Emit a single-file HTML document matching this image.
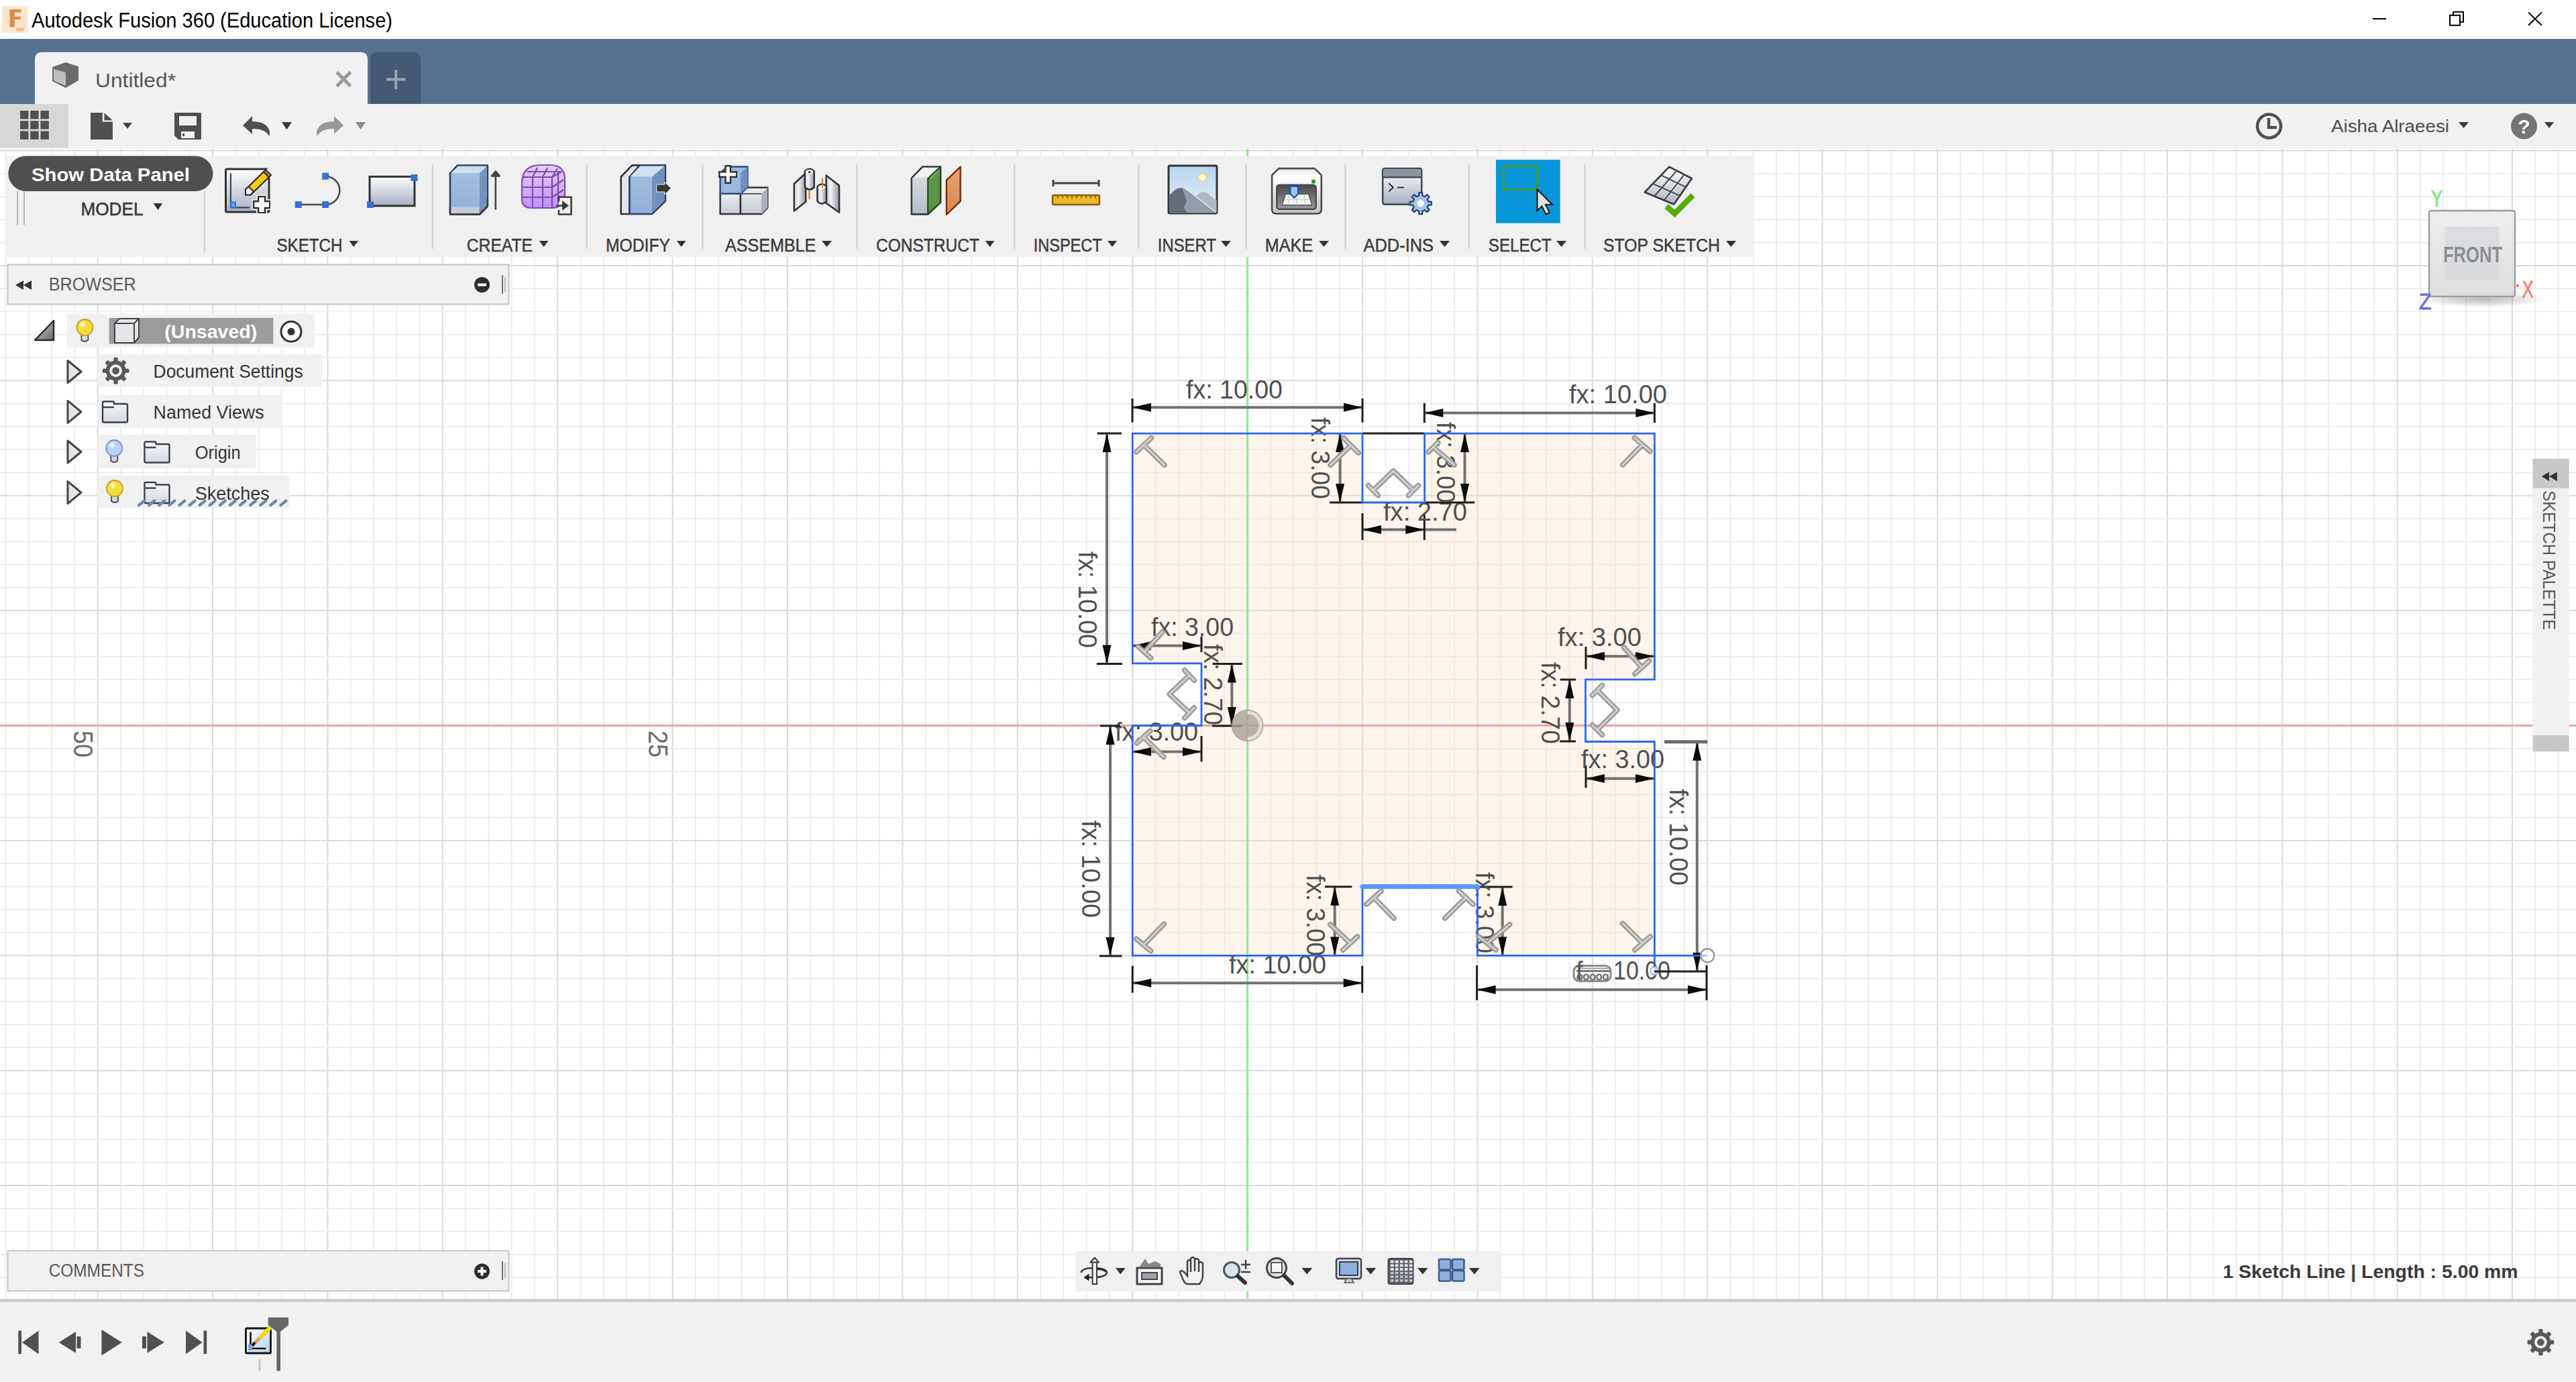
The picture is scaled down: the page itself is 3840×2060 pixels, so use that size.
<!DOCTYPE html>
<html><head><meta charset="utf-8"><title>Autodesk Fusion 360</title>
<style>html,body{margin:0;padding:0;width:3840px;height:2060px;overflow:hidden;background:#fff}
svg{display:block} text{font-family:"Liberation Sans", sans-serif;}</style></head>
<body><svg width="3840" height="2060" viewBox="0 0 3840 2060">
<rect x="0" y="0" width="3840" height="2060" fill="#ffffff"/>
<line x1="8.5" y1="222.0" x2="8.5" y2="1937.0" stroke="#ececec" stroke-width="1.7" />
<line x1="42.8" y1="222.0" x2="42.8" y2="1937.0" stroke="#ececec" stroke-width="1.7" />
<line x1="77.0" y1="222.0" x2="77.0" y2="1937.0" stroke="#ececec" stroke-width="1.7" />
<line x1="111.3" y1="222.0" x2="111.3" y2="1937.0" stroke="#ececec" stroke-width="1.7" />
<line x1="145.6" y1="222.0" x2="145.6" y2="1937.0" stroke="#dadada" stroke-width="2.0" />
<line x1="179.9" y1="222.0" x2="179.9" y2="1937.0" stroke="#ececec" stroke-width="1.7" />
<line x1="214.2" y1="222.0" x2="214.2" y2="1937.0" stroke="#ececec" stroke-width="1.7" />
<line x1="248.4" y1="222.0" x2="248.4" y2="1937.0" stroke="#ececec" stroke-width="1.7" />
<line x1="282.7" y1="222.0" x2="282.7" y2="1937.0" stroke="#ececec" stroke-width="1.7" />
<line x1="317.0" y1="222.0" x2="317.0" y2="1937.0" stroke="#dadada" stroke-width="2.0" />
<line x1="351.3" y1="222.0" x2="351.3" y2="1937.0" stroke="#ececec" stroke-width="1.7" />
<line x1="385.6" y1="222.0" x2="385.6" y2="1937.0" stroke="#ececec" stroke-width="1.7" />
<line x1="419.8" y1="222.0" x2="419.8" y2="1937.0" stroke="#ececec" stroke-width="1.7" />
<line x1="454.1" y1="222.0" x2="454.1" y2="1937.0" stroke="#ececec" stroke-width="1.7" />
<line x1="488.4" y1="222.0" x2="488.4" y2="1937.0" stroke="#dadada" stroke-width="2.0" />
<line x1="522.7" y1="222.0" x2="522.7" y2="1937.0" stroke="#ececec" stroke-width="1.7" />
<line x1="557.0" y1="222.0" x2="557.0" y2="1937.0" stroke="#ececec" stroke-width="1.7" />
<line x1="591.2" y1="222.0" x2="591.2" y2="1937.0" stroke="#ececec" stroke-width="1.7" />
<line x1="625.5" y1="222.0" x2="625.5" y2="1937.0" stroke="#ececec" stroke-width="1.7" />
<line x1="659.8" y1="222.0" x2="659.8" y2="1937.0" stroke="#dadada" stroke-width="2.0" />
<line x1="694.1" y1="222.0" x2="694.1" y2="1937.0" stroke="#ececec" stroke-width="1.7" />
<line x1="728.4" y1="222.0" x2="728.4" y2="1937.0" stroke="#ececec" stroke-width="1.7" />
<line x1="762.6" y1="222.0" x2="762.6" y2="1937.0" stroke="#ececec" stroke-width="1.7" />
<line x1="796.9" y1="222.0" x2="796.9" y2="1937.0" stroke="#ececec" stroke-width="1.7" />
<line x1="831.2" y1="222.0" x2="831.2" y2="1937.0" stroke="#dadada" stroke-width="2.0" />
<line x1="865.5" y1="222.0" x2="865.5" y2="1937.0" stroke="#ececec" stroke-width="1.7" />
<line x1="899.8" y1="222.0" x2="899.8" y2="1937.0" stroke="#ececec" stroke-width="1.7" />
<line x1="934.0" y1="222.0" x2="934.0" y2="1937.0" stroke="#ececec" stroke-width="1.7" />
<line x1="968.3" y1="222.0" x2="968.3" y2="1937.0" stroke="#ececec" stroke-width="1.7" />
<line x1="1002.6" y1="222.0" x2="1002.6" y2="1937.0" stroke="#dadada" stroke-width="2.0" />
<line x1="1036.9" y1="222.0" x2="1036.9" y2="1937.0" stroke="#ececec" stroke-width="1.7" />
<line x1="1071.2" y1="222.0" x2="1071.2" y2="1937.0" stroke="#ececec" stroke-width="1.7" />
<line x1="1105.4" y1="222.0" x2="1105.4" y2="1937.0" stroke="#ececec" stroke-width="1.7" />
<line x1="1139.7" y1="222.0" x2="1139.7" y2="1937.0" stroke="#ececec" stroke-width="1.7" />
<line x1="1174.0" y1="222.0" x2="1174.0" y2="1937.0" stroke="#dadada" stroke-width="2.0" />
<line x1="1208.3" y1="222.0" x2="1208.3" y2="1937.0" stroke="#ececec" stroke-width="1.7" />
<line x1="1242.6" y1="222.0" x2="1242.6" y2="1937.0" stroke="#ececec" stroke-width="1.7" />
<line x1="1276.8" y1="222.0" x2="1276.8" y2="1937.0" stroke="#ececec" stroke-width="1.7" />
<line x1="1311.1" y1="222.0" x2="1311.1" y2="1937.0" stroke="#ececec" stroke-width="1.7" />
<line x1="1345.4" y1="222.0" x2="1345.4" y2="1937.0" stroke="#dadada" stroke-width="2.0" />
<line x1="1379.7" y1="222.0" x2="1379.7" y2="1937.0" stroke="#ececec" stroke-width="1.7" />
<line x1="1414.0" y1="222.0" x2="1414.0" y2="1937.0" stroke="#ececec" stroke-width="1.7" />
<line x1="1448.2" y1="222.0" x2="1448.2" y2="1937.0" stroke="#ececec" stroke-width="1.7" />
<line x1="1482.5" y1="222.0" x2="1482.5" y2="1937.0" stroke="#ececec" stroke-width="1.7" />
<line x1="1516.8" y1="222.0" x2="1516.8" y2="1937.0" stroke="#dadada" stroke-width="2.0" />
<line x1="1551.1" y1="222.0" x2="1551.1" y2="1937.0" stroke="#ececec" stroke-width="1.7" />
<line x1="1585.4" y1="222.0" x2="1585.4" y2="1937.0" stroke="#ececec" stroke-width="1.7" />
<line x1="1619.6" y1="222.0" x2="1619.6" y2="1937.0" stroke="#ececec" stroke-width="1.7" />
<line x1="1653.9" y1="222.0" x2="1653.9" y2="1937.0" stroke="#ececec" stroke-width="1.7" />
<line x1="1688.2" y1="222.0" x2="1688.2" y2="1937.0" stroke="#dadada" stroke-width="2.0" />
<line x1="1722.5" y1="222.0" x2="1722.5" y2="1937.0" stroke="#ececec" stroke-width="1.7" />
<line x1="1756.8" y1="222.0" x2="1756.8" y2="1937.0" stroke="#ececec" stroke-width="1.7" />
<line x1="1791.0" y1="222.0" x2="1791.0" y2="1937.0" stroke="#ececec" stroke-width="1.7" />
<line x1="1825.3" y1="222.0" x2="1825.3" y2="1937.0" stroke="#ececec" stroke-width="1.7" />
<line x1="1859.6" y1="222.0" x2="1859.6" y2="1937.0" stroke="#dadada" stroke-width="2.0" />
<line x1="1893.9" y1="222.0" x2="1893.9" y2="1937.0" stroke="#ececec" stroke-width="1.7" />
<line x1="1928.2" y1="222.0" x2="1928.2" y2="1937.0" stroke="#ececec" stroke-width="1.7" />
<line x1="1962.4" y1="222.0" x2="1962.4" y2="1937.0" stroke="#ececec" stroke-width="1.7" />
<line x1="1996.7" y1="222.0" x2="1996.7" y2="1937.0" stroke="#ececec" stroke-width="1.7" />
<line x1="2031.0" y1="222.0" x2="2031.0" y2="1937.0" stroke="#dadada" stroke-width="2.0" />
<line x1="2065.3" y1="222.0" x2="2065.3" y2="1937.0" stroke="#ececec" stroke-width="1.7" />
<line x1="2099.6" y1="222.0" x2="2099.6" y2="1937.0" stroke="#ececec" stroke-width="1.7" />
<line x1="2133.8" y1="222.0" x2="2133.8" y2="1937.0" stroke="#ececec" stroke-width="1.7" />
<line x1="2168.1" y1="222.0" x2="2168.1" y2="1937.0" stroke="#ececec" stroke-width="1.7" />
<line x1="2202.4" y1="222.0" x2="2202.4" y2="1937.0" stroke="#dadada" stroke-width="2.0" />
<line x1="2236.7" y1="222.0" x2="2236.7" y2="1937.0" stroke="#ececec" stroke-width="1.7" />
<line x1="2271.0" y1="222.0" x2="2271.0" y2="1937.0" stroke="#ececec" stroke-width="1.7" />
<line x1="2305.2" y1="222.0" x2="2305.2" y2="1937.0" stroke="#ececec" stroke-width="1.7" />
<line x1="2339.5" y1="222.0" x2="2339.5" y2="1937.0" stroke="#ececec" stroke-width="1.7" />
<line x1="2373.8" y1="222.0" x2="2373.8" y2="1937.0" stroke="#dadada" stroke-width="2.0" />
<line x1="2408.1" y1="222.0" x2="2408.1" y2="1937.0" stroke="#ececec" stroke-width="1.7" />
<line x1="2442.4" y1="222.0" x2="2442.4" y2="1937.0" stroke="#ececec" stroke-width="1.7" />
<line x1="2476.6" y1="222.0" x2="2476.6" y2="1937.0" stroke="#ececec" stroke-width="1.7" />
<line x1="2510.9" y1="222.0" x2="2510.9" y2="1937.0" stroke="#ececec" stroke-width="1.7" />
<line x1="2545.2" y1="222.0" x2="2545.2" y2="1937.0" stroke="#dadada" stroke-width="2.0" />
<line x1="2579.5" y1="222.0" x2="2579.5" y2="1937.0" stroke="#ececec" stroke-width="1.7" />
<line x1="2613.8" y1="222.0" x2="2613.8" y2="1937.0" stroke="#ececec" stroke-width="1.7" />
<line x1="2648.0" y1="222.0" x2="2648.0" y2="1937.0" stroke="#ececec" stroke-width="1.7" />
<line x1="2682.3" y1="222.0" x2="2682.3" y2="1937.0" stroke="#ececec" stroke-width="1.7" />
<line x1="2716.6" y1="222.0" x2="2716.6" y2="1937.0" stroke="#dadada" stroke-width="2.0" />
<line x1="2750.9" y1="222.0" x2="2750.9" y2="1937.0" stroke="#ececec" stroke-width="1.7" />
<line x1="2785.2" y1="222.0" x2="2785.2" y2="1937.0" stroke="#ececec" stroke-width="1.7" />
<line x1="2819.4" y1="222.0" x2="2819.4" y2="1937.0" stroke="#ececec" stroke-width="1.7" />
<line x1="2853.7" y1="222.0" x2="2853.7" y2="1937.0" stroke="#ececec" stroke-width="1.7" />
<line x1="2888.0" y1="222.0" x2="2888.0" y2="1937.0" stroke="#dadada" stroke-width="2.0" />
<line x1="2922.3" y1="222.0" x2="2922.3" y2="1937.0" stroke="#ececec" stroke-width="1.7" />
<line x1="2956.6" y1="222.0" x2="2956.6" y2="1937.0" stroke="#ececec" stroke-width="1.7" />
<line x1="2990.8" y1="222.0" x2="2990.8" y2="1937.0" stroke="#ececec" stroke-width="1.7" />
<line x1="3025.1" y1="222.0" x2="3025.1" y2="1937.0" stroke="#ececec" stroke-width="1.7" />
<line x1="3059.4" y1="222.0" x2="3059.4" y2="1937.0" stroke="#dadada" stroke-width="2.0" />
<line x1="3093.7" y1="222.0" x2="3093.7" y2="1937.0" stroke="#ececec" stroke-width="1.7" />
<line x1="3128.0" y1="222.0" x2="3128.0" y2="1937.0" stroke="#ececec" stroke-width="1.7" />
<line x1="3162.2" y1="222.0" x2="3162.2" y2="1937.0" stroke="#ececec" stroke-width="1.7" />
<line x1="3196.5" y1="222.0" x2="3196.5" y2="1937.0" stroke="#ececec" stroke-width="1.7" />
<line x1="3230.8" y1="222.0" x2="3230.8" y2="1937.0" stroke="#dadada" stroke-width="2.0" />
<line x1="3265.1" y1="222.0" x2="3265.1" y2="1937.0" stroke="#ececec" stroke-width="1.7" />
<line x1="3299.4" y1="222.0" x2="3299.4" y2="1937.0" stroke="#ececec" stroke-width="1.7" />
<line x1="3333.6" y1="222.0" x2="3333.6" y2="1937.0" stroke="#ececec" stroke-width="1.7" />
<line x1="3367.9" y1="222.0" x2="3367.9" y2="1937.0" stroke="#ececec" stroke-width="1.7" />
<line x1="3402.2" y1="222.0" x2="3402.2" y2="1937.0" stroke="#dadada" stroke-width="2.0" />
<line x1="3436.5" y1="222.0" x2="3436.5" y2="1937.0" stroke="#ececec" stroke-width="1.7" />
<line x1="3470.8" y1="222.0" x2="3470.8" y2="1937.0" stroke="#ececec" stroke-width="1.7" />
<line x1="3505.0" y1="222.0" x2="3505.0" y2="1937.0" stroke="#ececec" stroke-width="1.7" />
<line x1="3539.3" y1="222.0" x2="3539.3" y2="1937.0" stroke="#ececec" stroke-width="1.7" />
<line x1="3573.6" y1="222.0" x2="3573.6" y2="1937.0" stroke="#dadada" stroke-width="2.0" />
<line x1="3607.9" y1="222.0" x2="3607.9" y2="1937.0" stroke="#ececec" stroke-width="1.7" />
<line x1="3642.2" y1="222.0" x2="3642.2" y2="1937.0" stroke="#ececec" stroke-width="1.7" />
<line x1="3676.4" y1="222.0" x2="3676.4" y2="1937.0" stroke="#ececec" stroke-width="1.7" />
<line x1="3710.7" y1="222.0" x2="3710.7" y2="1937.0" stroke="#ececec" stroke-width="1.7" />
<line x1="3745.0" y1="222.0" x2="3745.0" y2="1937.0" stroke="#dadada" stroke-width="2.0" />
<line x1="3779.3" y1="222.0" x2="3779.3" y2="1937.0" stroke="#ececec" stroke-width="1.7" />
<line x1="3813.6" y1="222.0" x2="3813.6" y2="1937.0" stroke="#ececec" stroke-width="1.7" />
<line x1="0.0" y1="1904.2" x2="3840.0" y2="1904.2" stroke="#ececec" stroke-width="1.7" />
<line x1="0.0" y1="1869.9" x2="3840.0" y2="1869.9" stroke="#ececec" stroke-width="1.7" />
<line x1="0.0" y1="1835.7" x2="3840.0" y2="1835.7" stroke="#ececec" stroke-width="1.7" />
<line x1="0.0" y1="1801.4" x2="3840.0" y2="1801.4" stroke="#ececec" stroke-width="1.7" />
<line x1="0.0" y1="1767.1" x2="3840.0" y2="1767.1" stroke="#dadada" stroke-width="2.0" />
<line x1="0.0" y1="1732.8" x2="3840.0" y2="1732.8" stroke="#ececec" stroke-width="1.7" />
<line x1="0.0" y1="1698.5" x2="3840.0" y2="1698.5" stroke="#ececec" stroke-width="1.7" />
<line x1="0.0" y1="1664.3" x2="3840.0" y2="1664.3" stroke="#ececec" stroke-width="1.7" />
<line x1="0.0" y1="1630.0" x2="3840.0" y2="1630.0" stroke="#ececec" stroke-width="1.7" />
<line x1="0.0" y1="1595.7" x2="3840.0" y2="1595.7" stroke="#dadada" stroke-width="2.0" />
<line x1="0.0" y1="1561.4" x2="3840.0" y2="1561.4" stroke="#ececec" stroke-width="1.7" />
<line x1="0.0" y1="1527.1" x2="3840.0" y2="1527.1" stroke="#ececec" stroke-width="1.7" />
<line x1="0.0" y1="1492.9" x2="3840.0" y2="1492.9" stroke="#ececec" stroke-width="1.7" />
<line x1="0.0" y1="1458.6" x2="3840.0" y2="1458.6" stroke="#ececec" stroke-width="1.7" />
<line x1="0.0" y1="1424.3" x2="3840.0" y2="1424.3" stroke="#dadada" stroke-width="2.0" />
<line x1="0.0" y1="1390.0" x2="3840.0" y2="1390.0" stroke="#ececec" stroke-width="1.7" />
<line x1="0.0" y1="1355.7" x2="3840.0" y2="1355.7" stroke="#ececec" stroke-width="1.7" />
<line x1="0.0" y1="1321.5" x2="3840.0" y2="1321.5" stroke="#ececec" stroke-width="1.7" />
<line x1="0.0" y1="1287.2" x2="3840.0" y2="1287.2" stroke="#ececec" stroke-width="1.7" />
<line x1="0.0" y1="1252.9" x2="3840.0" y2="1252.9" stroke="#dadada" stroke-width="2.0" />
<line x1="0.0" y1="1218.6" x2="3840.0" y2="1218.6" stroke="#ececec" stroke-width="1.7" />
<line x1="0.0" y1="1184.3" x2="3840.0" y2="1184.3" stroke="#ececec" stroke-width="1.7" />
<line x1="0.0" y1="1150.1" x2="3840.0" y2="1150.1" stroke="#ececec" stroke-width="1.7" />
<line x1="0.0" y1="1115.8" x2="3840.0" y2="1115.8" stroke="#ececec" stroke-width="1.7" />
<line x1="0.0" y1="1081.5" x2="3840.0" y2="1081.5" stroke="#dadada" stroke-width="2.0" />
<line x1="0.0" y1="1047.2" x2="3840.0" y2="1047.2" stroke="#ececec" stroke-width="1.7" />
<line x1="0.0" y1="1012.9" x2="3840.0" y2="1012.9" stroke="#ececec" stroke-width="1.7" />
<line x1="0.0" y1="978.7" x2="3840.0" y2="978.7" stroke="#ececec" stroke-width="1.7" />
<line x1="0.0" y1="944.4" x2="3840.0" y2="944.4" stroke="#ececec" stroke-width="1.7" />
<line x1="0.0" y1="910.1" x2="3840.0" y2="910.1" stroke="#dadada" stroke-width="2.0" />
<line x1="0.0" y1="875.8" x2="3840.0" y2="875.8" stroke="#ececec" stroke-width="1.7" />
<line x1="0.0" y1="841.5" x2="3840.0" y2="841.5" stroke="#ececec" stroke-width="1.7" />
<line x1="0.0" y1="807.3" x2="3840.0" y2="807.3" stroke="#ececec" stroke-width="1.7" />
<line x1="0.0" y1="773.0" x2="3840.0" y2="773.0" stroke="#ececec" stroke-width="1.7" />
<line x1="0.0" y1="738.7" x2="3840.0" y2="738.7" stroke="#dadada" stroke-width="2.0" />
<line x1="0.0" y1="704.4" x2="3840.0" y2="704.4" stroke="#ececec" stroke-width="1.7" />
<line x1="0.0" y1="670.1" x2="3840.0" y2="670.1" stroke="#ececec" stroke-width="1.7" />
<line x1="0.0" y1="635.9" x2="3840.0" y2="635.9" stroke="#ececec" stroke-width="1.7" />
<line x1="0.0" y1="601.6" x2="3840.0" y2="601.6" stroke="#ececec" stroke-width="1.7" />
<line x1="0.0" y1="567.3" x2="3840.0" y2="567.3" stroke="#dadada" stroke-width="2.0" />
<line x1="0.0" y1="533.0" x2="3840.0" y2="533.0" stroke="#ececec" stroke-width="1.7" />
<line x1="0.0" y1="498.7" x2="3840.0" y2="498.7" stroke="#ececec" stroke-width="1.7" />
<line x1="0.0" y1="464.5" x2="3840.0" y2="464.5" stroke="#ececec" stroke-width="1.7" />
<line x1="0.0" y1="430.2" x2="3840.0" y2="430.2" stroke="#ececec" stroke-width="1.7" />
<line x1="0.0" y1="395.9" x2="3840.0" y2="395.9" stroke="#dadada" stroke-width="2.0" />
<line x1="0.0" y1="361.6" x2="3840.0" y2="361.6" stroke="#ececec" stroke-width="1.7" />
<line x1="0.0" y1="327.3" x2="3840.0" y2="327.3" stroke="#ececec" stroke-width="1.7" />
<line x1="0.0" y1="293.1" x2="3840.0" y2="293.1" stroke="#ececec" stroke-width="1.7" />
<line x1="0.0" y1="258.8" x2="3840.0" y2="258.8" stroke="#ececec" stroke-width="1.7" />
<line x1="0.0" y1="224.5" x2="3840.0" y2="224.5" stroke="#dadada" stroke-width="2.0" />
<path d="M1688.2 646.1 L2031.0 646.1 L2031.0 749.0 L2123.6 749.0 L2123.6 646.1 L2466.4 646.1 L2466.4 1012.9 L2363.5 1012.9 L2363.5 1105.5 L2466.4 1105.5 L2466.4 1424.3 L2202.4 1424.3 L2202.4 1321.5 L2031.0 1321.5 L2031.0 1424.3 L1688.2 1424.3 L1688.2 1081.5 L1791.0 1081.5 L1791.0 988.9 L1688.2 988.9Z" fill="#fbe3c4" fill-opacity="0.33"/>
<line x1="0.0" y1="1081.5" x2="3840.0" y2="1081.5" stroke="#f39494" stroke-width="2.6" />
<line x1="1859.6" y1="222.0" x2="1859.6" y2="1937.0" stroke="#90ea90" stroke-width="3" />
<line x1="1688.0" y1="607.3" x2="2031.0" y2="607.3" stroke="#727272" stroke-width="4" />
<path d="M1688.0 607.3L1716.0 600.8L1716.0 613.8Z" fill="#0a0a0a"/>
<path d="M2031.0 607.3L2003.0 613.8L2003.0 600.8Z" fill="#0a0a0a"/>
<line x1="1688.0" y1="594.0" x2="1688.0" y2="629.5" stroke="#1e1e1e" stroke-width="3" />
<line x1="2031.0" y1="594.0" x2="2031.0" y2="629.5" stroke="#1e1e1e" stroke-width="3" />
<text x="1768.0" y="594.2" font-size="38.5" fill="#4f4f4f" font-weight="normal" text-anchor="start" textLength="144.0" lengthAdjust="spacingAndGlyphs" >fx: 10.00</text>
<line x1="2123.3" y1="615.4" x2="2466.4" y2="615.4" stroke="#727272" stroke-width="4" />
<path d="M2123.3 615.4L2151.3 608.9L2151.3 621.9Z" fill="#0a0a0a"/>
<path d="M2466.4 615.4L2438.4 621.9L2438.4 608.9Z" fill="#0a0a0a"/>
<line x1="2123.3" y1="600.8" x2="2123.3" y2="630.2" stroke="#1e1e1e" stroke-width="3" />
<line x1="2466.4" y1="600.8" x2="2466.4" y2="630.2" stroke="#1e1e1e" stroke-width="3" />
<text x="2339.0" y="600.8" font-size="38.5" fill="#4f4f4f" font-weight="normal" text-anchor="start" textLength="146.0" lengthAdjust="spacingAndGlyphs" >fx: 10.00</text>
<line x1="2031.0" y1="789.6" x2="2171.0" y2="789.6" stroke="#727272" stroke-width="4" />
<path d="M2031.0 789.6L2059.0 783.1L2059.0 796.1Z" fill="#0a0a0a"/>
<path d="M2123.3 789.6L2095.3 796.1L2095.3 783.1Z" fill="#0a0a0a"/>
<line x1="2031.0" y1="765.0" x2="2031.0" y2="805.0" stroke="#1e1e1e" stroke-width="3" />
<line x1="2123.3" y1="765.0" x2="2123.3" y2="805.0" stroke="#1e1e1e" stroke-width="3" />
<text x="2062.0" y="776.0" font-size="38.5" fill="#4f4f4f" font-weight="normal" text-anchor="start" textLength="125.0" lengthAdjust="spacingAndGlyphs" >fx: 2.70</text>
<line x1="1688.0" y1="962.6" x2="1791.0" y2="962.6" stroke="#727272" stroke-width="4" />
<path d="M1688.0 962.6L1716.0 956.1L1716.0 969.1Z" fill="#0a0a0a"/>
<path d="M1791.0 962.6L1763.0 969.1L1763.0 956.1Z" fill="#0a0a0a"/>
<line x1="1791.0" y1="948.7" x2="1791.0" y2="972.0" stroke="#1e1e1e" stroke-width="3" />
<text x="1716.0" y="947.8" font-size="38.5" fill="#4f4f4f" font-weight="normal" text-anchor="start" textLength="123.0" lengthAdjust="spacingAndGlyphs" >fx: 3.00</text>
<line x1="1688.0" y1="1120.6" x2="1791.0" y2="1120.6" stroke="#727272" stroke-width="4" />
<path d="M1688.0 1120.6L1716.0 1114.1L1716.0 1127.1Z" fill="#0a0a0a"/>
<path d="M1791.0 1120.6L1763.0 1127.1L1763.0 1114.1Z" fill="#0a0a0a"/>
<line x1="1791.0" y1="1097.0" x2="1791.0" y2="1135.4" stroke="#1e1e1e" stroke-width="3" />
<text x="1662.0" y="1104.0" font-size="38.5" fill="#4f4f4f" font-weight="normal" text-anchor="start" textLength="124.0" lengthAdjust="spacingAndGlyphs" >fx: 3.00</text>
<line x1="2364.0" y1="978.3" x2="2466.0" y2="978.3" stroke="#727272" stroke-width="4" />
<path d="M2364.0 978.3L2392.0 971.8L2392.0 984.8Z" fill="#0a0a0a"/>
<path d="M2466.0 978.3L2438.0 984.8L2438.0 971.8Z" fill="#0a0a0a"/>
<line x1="2364.0" y1="964.0" x2="2364.0" y2="997.5" stroke="#1e1e1e" stroke-width="3" />
<text x="2322.0" y="963.0" font-size="38.5" fill="#4f4f4f" font-weight="normal" text-anchor="start" textLength="125.0" lengthAdjust="spacingAndGlyphs" >fx: 3.00</text>
<line x1="2364.0" y1="1160.6" x2="2466.0" y2="1160.6" stroke="#727272" stroke-width="4" />
<path d="M2364.0 1160.6L2392.0 1154.1L2392.0 1167.1Z" fill="#0a0a0a"/>
<path d="M2466.0 1160.6L2438.0 1167.1L2438.0 1154.1Z" fill="#0a0a0a"/>
<line x1="2364.0" y1="1140.8" x2="2364.0" y2="1174.3" stroke="#1e1e1e" stroke-width="3" />
<text x="2357.0" y="1145.4" font-size="38.5" fill="#4f4f4f" font-weight="normal" text-anchor="start" textLength="124.0" lengthAdjust="spacingAndGlyphs" >fx: 3.00</text>
<line x1="1688.2" y1="1465.3" x2="2030.7" y2="1465.3" stroke="#727272" stroke-width="4" />
<path d="M1688.2 1465.3L1716.2 1458.8L1716.2 1471.8Z" fill="#0a0a0a"/>
<path d="M2030.7 1465.3L2002.7 1471.8L2002.7 1458.8Z" fill="#0a0a0a"/>
<line x1="1688.2" y1="1439.7" x2="1688.2" y2="1479.8" stroke="#1e1e1e" stroke-width="3" />
<line x1="2030.7" y1="1439.7" x2="2030.7" y2="1479.8" stroke="#1e1e1e" stroke-width="3" />
<text x="1832.0" y="1450.8" font-size="38.5" fill="#4f4f4f" font-weight="normal" text-anchor="start" textLength="145.0" lengthAdjust="spacingAndGlyphs" >fx: 10.00</text>
<line x1="2201.6" y1="1475.3" x2="2544.0" y2="1475.3" stroke="#727272" stroke-width="4" />
<path d="M2201.6 1475.3L2229.6 1468.8L2229.6 1481.8Z" fill="#0a0a0a"/>
<path d="M2544.0 1475.3L2516.0 1481.8L2516.0 1468.8Z" fill="#0a0a0a"/>
<line x1="2201.6" y1="1439.0" x2="2201.6" y2="1491.0" stroke="#1e1e1e" stroke-width="3" />
<line x1="2544.0" y1="1439.0" x2="2544.0" y2="1491.0" stroke="#1e1e1e" stroke-width="3" />
<text x="2405.0" y="1460.0" font-size="38.5" fill="#4f4f4f" font-weight="normal" text-anchor="start" textLength="85.0" lengthAdjust="spacingAndGlyphs" >10.00</text>
<rect x="2346" y="1439.5" width="55" height="23" rx="8" fill="none" stroke="#8e8e8e" stroke-width="3"/>
<line x1="2352.0" y1="1443.5" x2="2398.0" y2="1443.5" stroke="#a0a0a0" stroke-width="2.2" />
<line x1="2350.0" y1="1447.5" x2="2400.0" y2="1447.5" stroke="#7a7a7a" stroke-width="3" />
<text x="2350.0" y="1461.0" font-size="17" fill="#707070" font-weight="normal" text-anchor="start" textLength="48.0" lengthAdjust="spacingAndGlyphs" stroke="#707070" stroke-width="0.8">ooooo</text>
<text x="2349.0" y="1460.0" font-size="38.5" fill="#5a5a5a" font-weight="normal" text-anchor="start"  >f</text>
<circle cx="2466.4" cy="1447" r="6" fill="#ffffff" fill-opacity="0.7" stroke="#9bb8f0" stroke-width="2"/>
<line x1="1650.0" y1="646.0" x2="1650.0" y2="989.5" stroke="#727272" stroke-width="4" />
<path d="M1650.0 646.0L1656.5 674.0L1643.5 674.0Z" fill="#0a0a0a"/>
<path d="M1650.0 989.5L1643.5 961.5L1656.5 961.5Z" fill="#0a0a0a"/>
<line x1="1635.5" y1="646.0" x2="1672.0" y2="646.0" stroke="#1e1e1e" stroke-width="3" />
<line x1="1634.8" y1="989.5" x2="1673.0" y2="989.5" stroke="#1e1e1e" stroke-width="3" />
<text transform="translate(1608.0 822.0) rotate(90)" x="0" y="0" font-size="38.5" fill="#4f4f4f" textLength="144.0" lengthAdjust="spacingAndGlyphs">fx: 10.00</text>
<line x1="1655.0" y1="1081.9" x2="1655.0" y2="1425.0" stroke="#727272" stroke-width="4" />
<path d="M1655.0 1081.9L1661.5 1109.9L1648.5 1109.9Z" fill="#0a0a0a"/>
<path d="M1655.0 1425.0L1648.5 1397.0L1661.5 1397.0Z" fill="#0a0a0a"/>
<line x1="1640.0" y1="1081.9" x2="1670.0" y2="1081.9" stroke="#1e1e1e" stroke-width="3" />
<line x1="1638.8" y1="1425.0" x2="1672.3" y2="1425.0" stroke="#1e1e1e" stroke-width="3" />
<text transform="translate(1613.0 1223.0) rotate(90)" x="0" y="0" font-size="38.5" fill="#4f4f4f" textLength="145.0" lengthAdjust="spacingAndGlyphs">fx: 10.00</text>
<line x1="1997.6" y1="646.0" x2="1997.6" y2="749.0" stroke="#727272" stroke-width="4" />
<path d="M1997.6 646.0L2004.1 674.0L1991.1 674.0Z" fill="#0a0a0a"/>
<path d="M1997.6 749.0L1991.1 721.0L2004.1 721.0Z" fill="#0a0a0a"/>
<line x1="1982.0" y1="749.0" x2="2031.0" y2="749.0" stroke="#1e1e1e" stroke-width="3" />
<line x1="2031.0" y1="646.0" x2="2123.3" y2="646.0" stroke="#1e1e1e" stroke-width="3" />
<text transform="translate(1955.0 622.0) rotate(90)" x="0" y="0" font-size="38.5" fill="#4f4f4f" textLength="122.0" lengthAdjust="spacingAndGlyphs">fx: 3.00</text>
<line x1="2183.5" y1="646.0" x2="2183.5" y2="749.0" stroke="#727272" stroke-width="4" />
<path d="M2183.5 646.0L2190.0 674.0L2177.0 674.0Z" fill="#0a0a0a"/>
<path d="M2183.5 749.0L2177.0 721.0L2190.0 721.0Z" fill="#0a0a0a"/>
<line x1="2123.0" y1="749.0" x2="2198.3" y2="749.0" stroke="#1e1e1e" stroke-width="3" />
<text transform="translate(2142.0 629.0) rotate(90)" x="0" y="0" font-size="38.5" fill="#4f4f4f" textLength="121.0" lengthAdjust="spacingAndGlyphs">fx: 3.00</text>
<line x1="1836.3" y1="989.5" x2="1836.3" y2="1081.9" stroke="#727272" stroke-width="4" />
<path d="M1836.3 989.5L1842.8 1017.5L1829.8 1017.5Z" fill="#0a0a0a"/>
<path d="M1836.3 1081.9L1829.8 1053.9L1842.8 1053.9Z" fill="#0a0a0a"/>
<line x1="1807.6" y1="989.5" x2="1852.0" y2="989.5" stroke="#1e1e1e" stroke-width="3" />
<line x1="1807.0" y1="1081.9" x2="1852.0" y2="1081.9" stroke="#1e1e1e" stroke-width="3" />
<text transform="translate(1795.0 960.0) rotate(90)" x="0" y="0" font-size="38.5" fill="#4f4f4f" textLength="121.0" lengthAdjust="spacingAndGlyphs">fx: 2.70</text>
<line x1="2339.8" y1="1013.0" x2="2339.8" y2="1105.0" stroke="#727272" stroke-width="4" />
<path d="M2339.8 1013.0L2346.3 1041.0L2333.3 1041.0Z" fill="#0a0a0a"/>
<path d="M2339.8 1105.0L2333.3 1077.0L2346.3 1077.0Z" fill="#0a0a0a"/>
<line x1="2325.6" y1="1013.0" x2="2349.0" y2="1013.0" stroke="#1e1e1e" stroke-width="3" />
<line x1="2325.0" y1="1105.0" x2="2349.0" y2="1105.0" stroke="#1e1e1e" stroke-width="3" />
<text transform="translate(2297.5 987.0) rotate(90)" x="0" y="0" font-size="38.5" fill="#4f4f4f" textLength="122.0" lengthAdjust="spacingAndGlyphs">fx: 2.70</text>
<line x1="2529.8" y1="1105.8" x2="2529.8" y2="1447.9" stroke="#727272" stroke-width="4" />
<path d="M2529.8 1105.8L2536.3 1133.8L2523.3 1133.8Z" fill="#0a0a0a"/>
<path d="M2529.8 1447.9L2523.3 1419.9L2536.3 1419.9Z" fill="#0a0a0a"/>
<line x1="2466.0" y1="1447.9" x2="2545.0" y2="1447.9" stroke="#1e1e1e" stroke-width="3" />
<line x1="2481.0" y1="1105.8" x2="2545.0" y2="1105.8" stroke="#6a6a6a" stroke-width="5" />
<text transform="translate(2489.0 1176.0) rotate(90)" x="0" y="0" font-size="38.5" fill="#4f4f4f" textLength="144.0" lengthAdjust="spacingAndGlyphs">fx: 10.00</text>
<line x1="1989.7" y1="1321.8" x2="1989.7" y2="1424.4" stroke="#727272" stroke-width="4" />
<path d="M1989.7 1321.8L1996.2 1349.8L1983.2 1349.8Z" fill="#0a0a0a"/>
<path d="M1989.7 1424.4L1983.2 1396.4L1996.2 1396.4Z" fill="#0a0a0a"/>
<line x1="1975.0" y1="1321.8" x2="2015.3" y2="1321.8" stroke="#1e1e1e" stroke-width="3" />
<text transform="translate(1948.0 1304.0) rotate(90)" x="0" y="0" font-size="38.5" fill="#4f4f4f" textLength="121.0" lengthAdjust="spacingAndGlyphs">fx: 3.00</text>
<line x1="2239.7" y1="1322.0" x2="2239.7" y2="1424.4" stroke="#727272" stroke-width="4" />
<path d="M2239.7 1322.0L2246.2 1350.0L2233.2 1350.0Z" fill="#0a0a0a"/>
<path d="M2239.7 1424.4L2233.2 1396.4L2246.2 1396.4Z" fill="#0a0a0a"/>
<line x1="2201.6" y1="1322.0" x2="2254.6" y2="1322.0" stroke="#1e1e1e" stroke-width="3" />
<text transform="translate(2199.5 1300.0) rotate(90)" x="0" y="0" font-size="38.5" fill="#4f4f4f" textLength="121.0" lengthAdjust="spacingAndGlyphs">fx: 3.00</text>
<path d="M1688.2 646.1 L2031.0 646.1 L2031.0 749.0 L2123.6 749.0 L2123.6 646.1 L2466.4 646.1 L2466.4 1012.9 L2363.5 1012.9 L2363.5 1105.5 L2466.4 1105.5 L2466.4 1424.3 L2202.4 1424.3 L2202.4 1321.5 L2031.0 1321.5 L2031.0 1424.3 L1688.2 1424.3 L1688.2 1081.5 L1791.0 1081.5 L1791.0 988.9 L1688.2 988.9Z" fill="none" stroke="#2a66f2" stroke-width="2.8" stroke-linejoin="miter"/>
<line x1="2466.4" y1="1424.3" x2="2466.4" y2="1441.0" stroke="#2a66f2" stroke-width="2.8" />
<line x1="2466.4" y1="1424.3" x2="2545.2" y2="1424.3" stroke="#2a66f2" stroke-width="2.8" />
<line x1="2031.0" y1="1321.5" x2="2202.4" y2="1321.5" stroke="#5c98f7" stroke-width="7" stroke-linecap="round"/>
<circle cx="2545.2" cy="1424.3" r="10" fill="#ffffff" fill-opacity="0.6" stroke="#9a9a9a" stroke-width="2.5"/>
<circle cx="1859.6" cy="1081.5" r="24" fill="#aaa29a" opacity="0.82"/>
<path d="M1859.6 1062.0A19.5 19.5 0 0 1 1859.6 1101.0" fill="none" stroke="#f4efe8" stroke-width="5" opacity="0.75"/>
<path d="M1694.0 673.7 L1716.3 652.8 M1705.0 663.0 L1735.8 693.2 M2002.8 652.8 L2025.0 675.0 M2013.8 663.8 L1983.3 693.2 M2129.4 673.7 L2143.6 659.6 M2136.5 666.6 L2167.9 693.0 M2436.4 652.5 L2459.7 672.7 M2448.5 662.6 L2419.0 693.0 M2437.0 1004.6 L2458.3 985.3 M2447.7 995.0 L2420.8 965.0 M2437.0 1416.0 L2460.0 1396.0 M2448.5 1406.0 L2418.8 1376.4 M2002.0 1416.0 L2023.6 1396.0 M2012.8 1406.0 L1983.0 1378.0 M2037.0 1348.0 L2059.0 1328.0 M2048.0 1338.0 L2078.0 1368.7 M2174.5 1328.0 L2196.0 1348.0 M2185.0 1338.0 L2154.0 1368.7 M2204.0 1396.0 L2230.0 1416.0 M2217.0 1406.0 L2250.5 1378.0 M1694.0 1399.6 L1715.5 1417.5 M1704.7 1408.5 L1735.2 1377.4 M1696.4 963.4 L1715.5 980.8 M1706.0 972.0 L1733.0 941.7 M1694.7 1107.6 L1714.7 1089.4 M1704.7 1098.5 L1734.6 1128.4 M2047.0 731.0 L2077.0 702.0 L2107.0 731.0 M2381.0 1029.0 L2410.7 1058.3 L2381.0 1088.0 M1773.0 1006.5 L1743.3 1034.6 L1773.0 1062.5 M2054.3 738.5 L2039.7 723.5 M2114.3 723.5 L2099.7 738.5 M2373.6 1036.5 L2388.4 1021.5 M2388.4 1095.4 L2373.6 1080.6 M1765.8 998.9 L1780.2 1014.1 M1780.2 1054.8 L1765.8 1070.2" fill="none" stroke="#9a9a9a" stroke-width="8" stroke-linecap="round" stroke-linejoin="round" opacity="0.95"/>
<path d="M1694.0 673.7 L1716.3 652.8 M1705.0 663.0 L1735.8 693.2 M2002.8 652.8 L2025.0 675.0 M2013.8 663.8 L1983.3 693.2 M2129.4 673.7 L2143.6 659.6 M2136.5 666.6 L2167.9 693.0 M2436.4 652.5 L2459.7 672.7 M2448.5 662.6 L2419.0 693.0 M2437.0 1004.6 L2458.3 985.3 M2447.7 995.0 L2420.8 965.0 M2437.0 1416.0 L2460.0 1396.0 M2448.5 1406.0 L2418.8 1376.4 M2002.0 1416.0 L2023.6 1396.0 M2012.8 1406.0 L1983.0 1378.0 M2037.0 1348.0 L2059.0 1328.0 M2048.0 1338.0 L2078.0 1368.7 M2174.5 1328.0 L2196.0 1348.0 M2185.0 1338.0 L2154.0 1368.7 M2204.0 1396.0 L2230.0 1416.0 M2217.0 1406.0 L2250.5 1378.0 M1694.0 1399.6 L1715.5 1417.5 M1704.7 1408.5 L1735.2 1377.4 M1696.4 963.4 L1715.5 980.8 M1706.0 972.0 L1733.0 941.7 M1694.7 1107.6 L1714.7 1089.4 M1704.7 1098.5 L1734.6 1128.4 M2047.0 731.0 L2077.0 702.0 L2107.0 731.0 M2381.0 1029.0 L2410.7 1058.3 L2381.0 1088.0 M1773.0 1006.5 L1743.3 1034.6 L1773.0 1062.5 M2054.3 738.5 L2039.7 723.5 M2114.3 723.5 L2099.7 738.5 M2373.6 1036.5 L2388.4 1021.5 M2388.4 1095.4 L2373.6 1080.6 M1765.8 998.9 L1780.2 1014.1 M1780.2 1054.8 L1765.8 1070.2" fill="none" stroke="#d2d2d2" stroke-width="2.6" stroke-linecap="round" stroke-linejoin="round"/>
<text transform="translate(110 1089) rotate(90)" font-size="40" fill="#6b6b6b" textLength="40" lengthAdjust="spacingAndGlyphs">50</text>
<text transform="translate(966.5 1089) rotate(90)" font-size="40" fill="#6b6b6b" textLength="40" lengthAdjust="spacingAndGlyphs">25</text>
<rect x="0.0" y="0.0" width="3840.0" height="58.0" fill="#ffffff" />
<defs><linearGradient id="gF" x1="0" y1="0" x2="1" y2="1"><stop offset="0" stop-color="#fbd7b5"/><stop offset="1" stop-color="#f6c49a"/></linearGradient><linearGradient id="gBlueGrey" x1="0" y1="0" x2="0" y2="1"><stop offset="0" stop-color="#ffffff"/><stop offset="1" stop-color="#a7b0c2"/></linearGradient><linearGradient id="gCubeBlue" x1="0" y1="0" x2="0" y2="1"><stop offset="0" stop-color="#b7cfe9"/><stop offset="1" stop-color="#89a9d2"/></linearGradient><linearGradient id="gPurple" x1="0" y1="0" x2="0" y2="1"><stop offset="0" stop-color="#e0c8f2"/><stop offset="1" stop-color="#c58df0"/></linearGradient><linearGradient id="gSky" x1="0" y1="0" x2="0" y2="1"><stop offset="0" stop-color="#b4d4ee"/><stop offset="1" stop-color="#e9f2fa"/></linearGradient><linearGradient id="gCube" x1="0" y1="0" x2="0" y2="1"><stop offset="0" stop-color="#ececec"/><stop offset="1" stop-color="#dadada"/></linearGradient><radialGradient id="gShadow" cx="0.5" cy="0.5" r="0.5"><stop offset="0" stop-color="#000" stop-opacity="0.28"/><stop offset="1" stop-color="#000" stop-opacity="0"/></radialGradient></defs>
<rect x="2.0" y="9.0" width="40.0" height="40.0" fill="#fcebdc" />
<rect x="5.0" y="12.0" width="34.0" height="34.0" fill="#f9dfc8" opacity="0.7"/>
<path d="M14.5 14H31.5Q32 18 31 18.5H21.8V24.8H30.6V29H21.8V40Q18 41 14.5 40Z" fill="#d98439" opacity="0.92"/>
<rect x="24.3" y="41.5" width="10.9" height="4.7" fill="#f3b983" />
<text x="47.0" y="41.0" font-size="31" fill="#000000" font-weight="normal" text-anchor="start" textLength="538.0" lengthAdjust="spacingAndGlyphs" >Autodesk Fusion 360 (Education License)</text>
<line x1="3537.0" y1="28.0" x2="3557.0" y2="28.0" stroke="#000" stroke-width="2" />
<path d="M3652 22.8H3667V37.8H3652Z M3657 22.8V17.8H3672V32.8H3667" fill="none" stroke="#000" stroke-width="2"/>
<path d="M3769 18.4L3789 37.8M3789 18.4L3769 37.8" stroke="#000" stroke-width="2"/>
<rect x="0.0" y="58.0" width="3840.0" height="97.0" fill="#54728f" />
<path d="M52 155V88.7Q52 77.7 63 77.7H537Q548 77.7 548 88.7V155Z" fill="#f1f1f3"/>
<path d="M552 155V88.7Q552 77.7 563 77.7H616Q627 77.7 627 88.7V155Z" fill="#425a74"/>
<path d="M78 100L98 93L117 99V120L98 131L78 121Z" fill="#6b6b6b"/>
<path d="M80 103L98 108V128L80 120Z" fill="#bcbebf"/>
<text x="142.0" y="129.5" font-size="29.5" fill="#555555" font-weight="normal" text-anchor="start" textLength="120.0" lengthAdjust="spacingAndGlyphs" >Untitled*</text>
<path d="M502 107.5L522.5 128.5M522.5 107.5L502 128.5" stroke="#9a9a9a" stroke-width="5"/>
<path d="M590.2 104V132.7M576 118.3H604.6" stroke="#9aa3ad" stroke-width="4"/>
<rect x="0.0" y="155.0" width="3840.0" height="67.0" fill="#f1f1f1" />
<rect x="0.0" y="155.0" width="102.0" height="65.0" fill="#d7d7d7" />
<rect x="30.0" y="165.0" width="12.4" height="12.4" fill="#505050" />
<rect x="30.0" y="180.2" width="12.4" height="12.4" fill="#505050" />
<rect x="30.0" y="195.4" width="12.4" height="12.4" fill="#505050" />
<rect x="45.2" y="165.0" width="12.4" height="12.4" fill="#505050" />
<rect x="45.2" y="180.2" width="12.4" height="12.4" fill="#505050" />
<rect x="45.2" y="195.4" width="12.4" height="12.4" fill="#505050" />
<rect x="60.4" y="165.0" width="12.4" height="12.4" fill="#505050" />
<rect x="60.4" y="180.2" width="12.4" height="12.4" fill="#505050" />
<rect x="60.4" y="195.4" width="12.4" height="12.4" fill="#505050" />
<path d="M135 168H152.8V181.6H168V208H135Z" fill="#505050"/><path d="M155.4 168.3L167.8 179.2H155.4Z" fill="#505050"/>
<path d="M183.0 183.0H197.0L190.0 192.0Z" fill="#404040"/>
<path d="M260 168H300V208H266L260 202Z" fill="#505050"/>
<rect x="267.0" y="173.0" width="26.0" height="14.0" fill="#f1f1f1" />
<rect x="270.0" y="196.0" width="20.0" height="10.0" fill="#f1f1f1" />
<rect x="272.0" y="199.0" width="3.0" height="4.0" fill="#505050" />
<path d="M362 187L376 173V181Q398 181 402 196V203Q394 191 376 192V200Z" fill="#505050"/>
<path d="M420.0 182.0H435.0L427.5 193.0Z" fill="#383838"/>
<path d="M512 187L498 173V181Q476 181 472 196V203Q480 191 498 192V200Z" fill="#999999"/>
<path d="M530.0 182.0H545.0L537.5 193.0Z" fill="#8a8a8a"/>
<circle cx="3382.5" cy="188" r="17.5" fill="none" stroke="#505050" stroke-width="4.5"/>
<path d="M3382 176V190H3394" fill="none" stroke="#505050" stroke-width="4.5"/>
<text x="3475.0" y="197.0" font-size="26" fill="#4b4b4b" font-weight="normal" text-anchor="start" textLength="176.0" lengthAdjust="spacingAndGlyphs" >Aisha Alraeesi</text>
<path d="M3665.0 182.0H3680.0L3672.5 191.0Z" fill="#3c3c3c"/>
<circle cx="3762.5" cy="188" r="19.5" fill="#747474"/>
<text x="3762.5" y="199.0" font-size="30" fill="#ffffff" font-weight="bold" text-anchor="middle"  >?</text>
<path d="M3793.0 182.0H3807.0L3800.0 191.0Z" fill="#3c3c3c"/>
<rect x="10.0" y="232.5" width="2602.4" height="150.5" fill="#f0f0f0" />
<line x1="644.8" y1="245.0" x2="644.8" y2="371.0" stroke="#d3d3d3" stroke-width="2.5" />
<line x1="874.7" y1="245.0" x2="874.7" y2="371.0" stroke="#d3d3d3" stroke-width="2.5" />
<line x1="1047.3" y1="245.0" x2="1047.3" y2="371.0" stroke="#d3d3d3" stroke-width="2.5" />
<line x1="1277.4" y1="245.0" x2="1277.4" y2="371.0" stroke="#d3d3d3" stroke-width="2.5" />
<line x1="1512.2" y1="245.0" x2="1512.2" y2="371.0" stroke="#d3d3d3" stroke-width="2.5" />
<line x1="1697.3" y1="245.0" x2="1697.3" y2="371.0" stroke="#d3d3d3" stroke-width="2.5" />
<line x1="1857.5" y1="245.0" x2="1857.5" y2="371.0" stroke="#d3d3d3" stroke-width="2.5" />
<line x1="2005.3" y1="245.0" x2="2005.3" y2="371.0" stroke="#d3d3d3" stroke-width="2.5" />
<line x1="2190.0" y1="245.0" x2="2190.0" y2="371.0" stroke="#d3d3d3" stroke-width="2.5" />
<line x1="2362.6" y1="245.0" x2="2362.6" y2="371.0" stroke="#d3d3d3" stroke-width="2.5" />
<line x1="305.0" y1="285.0" x2="305.0" y2="376.0" stroke="#d3d3d3" stroke-width="2.5" />
<line x1="26.0" y1="285.0" x2="26.0" y2="335.5" stroke="#b8b8b8" stroke-width="2" />
<line x1="36.0" y1="285.0" x2="36.0" y2="335.5" stroke="#b8b8b8" stroke-width="2" />
<rect x="12.4" y="232.4" width="305" height="52.6" rx="26.3" fill="#4f4f4f"/>
<text x="47.0" y="270.0" font-size="27" fill="#ffffff" font-weight="bold" text-anchor="start" textLength="236.0" lengthAdjust="spacingAndGlyphs" >Show Data Panel</text>
<text x="120.5" y="320.6" font-size="27" fill="#3b3b3b" font-weight="normal" text-anchor="start" textLength="93.0" lengthAdjust="spacingAndGlyphs" stroke="#3b3b3b" stroke-width="0.6">MODEL</text>
<path d="M228.6 303.0H242.2L235.4 313.0Z" fill="#333"/>
<text x="412.4" y="375.3" font-size="27" fill="#3d3d3d" font-weight="normal" text-anchor="start" textLength="98.2" lengthAdjust="spacingAndGlyphs" stroke="#3d3d3d" stroke-width="0.5">SKETCH</text>
<path d="M520.5 359.0H534.0L527.2 368.0Z" fill="#333"/>
<text x="695.8" y="375.3" font-size="27" fill="#3d3d3d" font-weight="normal" text-anchor="start" textLength="98.2" lengthAdjust="spacingAndGlyphs" stroke="#3d3d3d" stroke-width="0.5">CREATE</text>
<path d="M803.8 359.0H817.5L810.6 368.0Z" fill="#333"/>
<text x="903.0" y="375.3" font-size="27" fill="#3d3d3d" font-weight="normal" text-anchor="start" textLength="95.9" lengthAdjust="spacingAndGlyphs" stroke="#3d3d3d" stroke-width="0.5">MODIFY</text>
<path d="M1008.8 359.0H1022.5L1015.6 368.0Z" fill="#333"/>
<text x="1080.9" y="375.3" font-size="27" fill="#3d3d3d" font-weight="normal" text-anchor="start" textLength="135.4" lengthAdjust="spacingAndGlyphs" stroke="#3d3d3d" stroke-width="0.5">ASSEMBLE</text>
<path d="M1225.0 359.0H1240.0L1232.5 368.0Z" fill="#333"/>
<text x="1306.0" y="375.3" font-size="27" fill="#3d3d3d" font-weight="normal" text-anchor="start" textLength="154.0" lengthAdjust="spacingAndGlyphs" stroke="#3d3d3d" stroke-width="0.5">CONSTRUCT</text>
<path d="M1468.7 359.0H1482.4L1475.6 368.0Z" fill="#333"/>
<text x="1540.7" y="375.3" font-size="27" fill="#3d3d3d" font-weight="normal" text-anchor="start" textLength="101.9" lengthAdjust="spacingAndGlyphs" stroke="#3d3d3d" stroke-width="0.5">INSPECT</text>
<path d="M1651.0 359.0H1665.0L1658.0 368.0Z" fill="#333"/>
<text x="1725.8" y="375.3" font-size="27" fill="#3d3d3d" font-weight="normal" text-anchor="start" textLength="87.0" lengthAdjust="spacingAndGlyphs" stroke="#3d3d3d" stroke-width="0.5">INSERT</text>
<path d="M1820.0 359.0H1835.0L1827.5 368.0Z" fill="#333"/>
<text x="1885.7" y="375.3" font-size="27" fill="#3d3d3d" font-weight="normal" text-anchor="start" textLength="71.3" lengthAdjust="spacingAndGlyphs" stroke="#3d3d3d" stroke-width="0.5">MAKE</text>
<path d="M1966.0 359.0H1981.0L1973.5 368.0Z" fill="#333"/>
<text x="2032.6" y="375.3" font-size="27" fill="#3d3d3d" font-weight="normal" text-anchor="start" textLength="104.4" lengthAdjust="spacingAndGlyphs" stroke="#3d3d3d" stroke-width="0.5">ADD-INS</text>
<path d="M2146.0 359.0H2161.0L2153.5 368.0Z" fill="#333"/>
<text x="2218.8" y="375.3" font-size="27" fill="#3d3d3d" font-weight="normal" text-anchor="start" textLength="93.9" lengthAdjust="spacingAndGlyphs" stroke="#3d3d3d" stroke-width="0.5">SELECT</text>
<path d="M2320.0 359.0H2335.0L2327.5 368.0Z" fill="#333"/>
<text x="2390.0" y="375.3" font-size="27" fill="#3d3d3d" font-weight="normal" text-anchor="start" textLength="174.0" lengthAdjust="spacingAndGlyphs" stroke="#3d3d3d" stroke-width="0.5">STOP SKETCH</text>
<path d="M2573.0 359.0H2588.0L2580.5 368.0Z" fill="#333"/>
<rect x="336.5" y="252" width="64.5" height="64" rx="2" fill="url(#gBlueGrey)" stroke="#333" stroke-width="3"/>
<path d="M343.9 258.2V309.3H371.9" fill="none" stroke="#3d4552" stroke-width="2.2"/>
<rect x="342.9" y="300.5" width="9.1" height="9.5" fill="#3f73c4" />
<rect x="345.0" y="302.5" width="5.0" height="5.5" fill="#5a9cff" />
<path d="M398 252L405 259" stroke="#f0f0f0" stroke-width="8"/>
<path d="M366 282.5L393 256L401 264L373.5 290.5H366Z" fill="#f7c815" stroke="#2e2e2e" stroke-width="2.2" stroke-linejoin="round"/>
<path d="M366 282.5L370.5 278L378 285.5L373.5 290.5H366Z" fill="#fdfdfd" stroke="#2e2e2e" stroke-width="2.2" stroke-linejoin="round"/>
<path d="M393 256L396 253L404 261L401 264Z" fill="#c7834a" stroke="#2e2e2e" stroke-width="2"/>
<path d="M390.1 290.5V319.5M375.6 305.1H404.6" stroke="#f0f0f0" stroke-width="16"/>
<path d="M390.1 292V318M377 305.1H403" stroke="#2e2e2e" stroke-width="12.5"/>
<path d="M390.1 294.3V315.9M379.3 305.1H400.9" stroke="#ffffff" stroke-width="7.5"/>
<path d="M444.8 305H485.2A21 21 0 0 0 485.2 262.7" fill="none" stroke="#444" stroke-width="2.5"/>
<rect x="439.8" y="300.0" width="10.0" height="10.0" fill="#3a6fd1" />
<rect x="480.2" y="300.0" width="10.0" height="10.0" fill="#3a6fd1" />
<rect x="480.2" y="257.7" width="10.0" height="10.0" fill="#3a6fd1" />
<rect x="551" y="263.3" width="67" height="43.5" fill="url(#gBlueGrey)" stroke="#333" stroke-width="3"/>
<rect x="547.0" y="300.0" width="10.0" height="10.0" fill="#3a6fd1" />
<rect x="612.5" y="260.0" width="10.0" height="10.0" fill="#3a6fd1" />
<defs><linearGradient id="gExF" x1="0" y1="0" x2="0" y2="1"><stop offset="0" stop-color="#a6c2e0"/><stop offset="1" stop-color="#8fb0da"/></linearGradient></defs>
<path d="M671 258.5L682 246.5H726.8V307.5L715 319.5H671Z" fill="url(#gExF)" stroke="#2b3f66" stroke-width="2.6" stroke-linejoin="round"/>
<path d="M672.3 258L682.6 247.8H725.5L714.8 258Z" fill="#cfe0f1"/>
<path d="M715 258.5L726 247.5V305L715 317Z" fill="#7592bf"/>
<path d="M672.3 308.5H714.2V318.3H672.3Z" fill="#c6cbd4"/>
<path d="M671 308V319.5H715L726.8 307.5V296" fill="none" stroke="#3a3a3a" stroke-width="2.6" stroke-linejoin="round"/>
<path d="M738.8 312.5V258M733 262.4L738.8 255.4L744.6 262.4Z" fill="#444" stroke="#444" stroke-width="2.6" stroke-linejoin="round"/>
<defs><linearGradient id="gPur2" x1="0" y1="0" x2="0" y2="1"><stop offset="0" stop-color="#e4d0f5"/><stop offset="1" stop-color="#c38ef7"/></linearGradient></defs>
<path d="M778 274Q778 246 806 246H820Q842 246 842 268V290Q842 310 822 310H792Q778 310 778 296Z" fill="url(#gPur2)" stroke="#7a4db0" stroke-width="2.2"/>
<path d="M779 264H823M779 279H823M779 294H823M794 264V310M809 264V310M823 264V309M794 264L801 250M809 264L816 250M823 264L831 251M786 256H836M823 264L837 256M823 279L840 268M823 294L840 283M832 256V304" fill="none" stroke="#7a4db0" stroke-width="2.2"/>
<path d="M833 300.5V293.7H851.5V319.5H833V313" fill="#f0f0f0" stroke="#3a3a3a" stroke-width="2.6"/>
<path d="M829 306.5H845" stroke="#3a3a3a" stroke-width="2.6"/><path d="M838 299L848 306.5L838 314Z" fill="#3a3a3a"/>
<path d="M925.7 263.5L942.3 246.4H954L938.4 264V319H925.7Z" fill="#e3e5ea" stroke="#333" stroke-width="2.6" stroke-linejoin="round"/>
<path d="M938.4 264L954 246.4H991.9V299.8L972 319H938.4Z" fill="url(#gExF)" stroke="#2b3f66" stroke-width="2.6" stroke-linejoin="round"/>
<path d="M939.6 263L954.5 247.6H990.6L972 263Z" fill="#cfe0f1"/>
<path d="M972 264L990.8 247.5V299.3L972 317.8Z" fill="#7390bd"/>
<path d="M978.8 275H990.9V271.2L1000.3 280.6L990.9 290V286H978.8Z" fill="#363636" stroke="#f0f0f0" stroke-width="1"/>
<defs><linearGradient id="gGreyBox" x1="0" y1="0" x2="0" y2="1"><stop offset="0" stop-color="#eceef2"/><stop offset="1" stop-color="#c5cad3"/></linearGradient><linearGradient id="gCyl" x1="0" y1="0" x2="1" y2="0"><stop offset="0" stop-color="#c8ccd4"/><stop offset="0.35" stop-color="#f4f5f7"/><stop offset="1" stop-color="#8e96a2"/></linearGradient></defs>
<path d="M1073.6 288.8H1103.9V319.1H1073.6Z" fill="url(#gGreyBox)" stroke="#333" stroke-width="2.5" stroke-linejoin="round"/>
<path d="M1103.9 288.8L1113.2 279.5H1144.2V309.8L1134.9 319.1H1103.9Z" fill="url(#gGreyBox)" stroke="#333" stroke-width="2.5" stroke-linejoin="round"/>
<path d="M1134.9 288.8L1144.2 279.5V309.8L1134.9 319.1Z" fill="#a9b0bb"/>
<line x1="1103.9" y1="288.8" x2="1134.9" y2="288.8" stroke="#333" stroke-width="1.5" />
<path d="M1073.6 258.1L1084.1 248.4H1114.4V278.8L1103.9 288.8H1073.6Z" fill="#9ab9df" stroke="#2b4a7c" stroke-width="2.5" stroke-linejoin="round"/>
<path d="M1103.9 258.1L1114.4 248.4V278.8L1103.9 288.8Z" fill="#6f8fbf"/>
<path d="M1085.2 246V274M1071 260H1099" stroke="#333" stroke-width="10"/><path d="M1085.2 248.5V271.5M1073.5 260H1096.9" stroke="#fff" stroke-width="5"/>
<path d="M1183.8 274L1200.5 258.5L1201.3 300.4L1183.8 314.4Z" fill="url(#gCyl)" stroke="#333" stroke-width="2.5" stroke-linejoin="round"/>
<path d="M1199.8 255.5V279Q1206.7 286 1213.7 279V255.5Q1206.7 248 1199.8 255.5Z" fill="url(#gCyl)" stroke="#333" stroke-width="2.5"/>
<ellipse cx="1206.6" cy="256" rx="5.5" ry="3.2" fill="#fff"/><circle cx="1206.6" cy="256.4" r="1.6" fill="#222"/>
<line x1="1206.4" y1="283.4" x2="1206.4" y2="297.3" stroke="#f07a10" stroke-width="2.2" />
<path d="M1231.6 261.6L1251 276.4V316.7L1231.6 302.8Z" fill="url(#gCyl)" stroke="#333" stroke-width="2.5" stroke-linejoin="round"/>
<path d="M1218.4 278V300Q1225.2 307 1232 300V278Q1225.2 271 1218.4 278Z" fill="url(#gCyl)" stroke="#333" stroke-width="2.5"/>
<ellipse cx="1225.2" cy="279" rx="5.2" ry="3" fill="#fff"/>
<line x1="1226.1" y1="265.5" x2="1226.1" y2="280.3" stroke="#f07a10" stroke-width="2.2" />
<defs><linearGradient id="gCon" x1="0" y1="0" x2="0" y2="1"><stop offset="0" stop-color="#f3f3f6"/><stop offset="0.22" stop-color="#f1f1f4"/><stop offset="0.24" stop-color="#d6d9df"/><stop offset="1" stop-color="#b5bbc9"/></linearGradient><linearGradient id="gOr" x1="0" y1="0" x2="0" y2="1"><stop offset="0" stop-color="#eda46c"/><stop offset="1" stop-color="#d98550"/></linearGradient></defs>
<path d="M1358.8 265.4L1375.4 248.5H1402V301.8L1383.2 319.4H1358.8Z" fill="url(#gCon)" stroke="#3a3a3a" stroke-width="2.6" stroke-linejoin="round"/>
<path d="M1383.2 266L1402 248.5V301.8L1383.2 319.4Z" fill="#5b9447" stroke="#1f4a1a" stroke-width="2.2" stroke-linejoin="round"/>
<path d="M1386.5 266L1399 254" stroke="#8cc07a" stroke-width="1.5"/>
<path d="M1410.9 268.6L1431.7 248.5V299.9L1410.9 320Z" fill="url(#gOr)" stroke="#7a2a05" stroke-width="2.4" stroke-linejoin="round"/>
<path d="M1570 268V278M1638 268V278M1570 273H1638" stroke="#444" stroke-width="3"/>
<rect x="1569" y="291" width="70" height="14" rx="2" fill="#e9bd2a" stroke="#8b5b12" stroke-width="2.5"/>
<path d="M1577 292V296M1584 292V296M1591 292V296M1598 292V296M1605 292V296M1612 292V296M1619 292V296M1626 292V296M1633 292V296" stroke="#8b5b12" stroke-width="1.5"/>
<rect x="1742" y="247" width="72" height="71" rx="2" fill="url(#gSky)" stroke="#333" stroke-width="3"/>
<circle cx="1792.5" cy="264.5" r="6" fill="#fffbe0" stroke="#f2d27a" stroke-width="2"/>
<path d="M1783 292Q1792 283 1800 288L1813.5 299V317H1795Z" fill="#aeb9c3"/>
<path d="M1743.5 291Q1758 276 1766 281Q1772 284 1780 291L1813.5 318V317.5H1743.5Z" fill="#929cab"/>
<path d="M1743.5 291Q1756 277 1762 281Q1767 292 1769 300Q1767 306 1764 310Q1768 315 1771 317.5H1743.5Z" fill="#646c79"/>
<path d="M1766 281Q1772 284 1780 291L1812 316" fill="none" stroke="#f4f1dc" stroke-width="1.2"/>
<defs><linearGradient id="gMake" x1="0" y1="0" x2="0" y2="1"><stop offset="0" stop-color="#e6e8ec"/><stop offset="0.2" stop-color="#ffffff"/><stop offset="1" stop-color="#c4c4c4"/></linearGradient><linearGradient id="gWin" x1="0" y1="0" x2="0" y2="1"><stop offset="0" stop-color="#4a4a4a"/><stop offset="1" stop-color="#9a9a9a"/></linearGradient></defs>
<path d="M1896.1 261.2L1906.2 251.1H1959.7L1969.8 261.2V312Q1969.8 318.5 1963.3 318.5H1902.6Q1896.1 318.5 1896.1 312Z" fill="url(#gMake)" stroke="#454a52" stroke-width="2.6" stroke-linejoin="round"/>
<rect x="1903.2" y="275.8" width="58.6" height="35.9" rx="4" fill="url(#gWin)" stroke="#454a52" stroke-width="2.4"/>
<path d="M1911.3 305.6L1916.3 289.5H1950.7L1955.7 305.6Z" fill="#f2f2f2" stroke="#454a52" stroke-width="1.2"/>
<path d="M1914 297.5H1953M1922 289.5L1920 305.6M1933 289.5V305.6M1944 289.5L1946 305.6" stroke="#c9c9c9" stroke-width="1"/>
<path d="M1923.4 277.8H1935V289L1929.2 295L1923.4 289Z" fill="#9cc6e6" stroke="#1f45c0" stroke-width="2"/>
<rect x="1955.2" y="267.8" width="5.5" height="5.5" fill="#1f9a1f" />
<rect x="2061.2" y="251.1" width="58" height="53.5" rx="3" fill="url(#gBlueGrey)" stroke="#454a52" stroke-width="2.6"/>
<rect x="2062.7" y="252.6" width="55.0" height="11.6" fill="#8b939f" />
<line x1="2062.2" y1="264.2" x2="2118.2" y2="264.2" stroke="#454a52" stroke-width="2.4" />
<path d="M2070.3 273.3L2076.8 279.4L2070.3 285.4M2082.9 279.4H2093" fill="none" stroke="#333" stroke-width="2"/>
<path d="M2115.1 291.6 L2115.3 287.1 L2120.1 287.1 L2120.3 291.6 L2124.0 293.1 L2127.3 290.1 L2130.7 293.5 L2127.7 296.8 L2129.2 300.5 L2133.7 300.7 L2133.7 305.5 L2129.2 305.7 L2127.7 309.4 L2130.7 312.7 L2127.3 316.1 L2124.0 313.1 L2120.3 314.6 L2120.1 319.1 L2115.3 319.1 L2115.1 314.6 L2111.4 313.1 L2108.1 316.1 L2104.7 312.7 L2107.7 309.4 L2106.2 305.7 L2101.7 305.5 L2101.7 300.7 L2106.2 300.5 L2107.7 296.8 L2104.7 293.5 L2108.1 290.1 L2111.4 293.1Z" fill="#a9c4e4" stroke="#2a4a80" stroke-width="2.4" stroke-linejoin="round"/>
<circle cx="2117.7" cy="303.1" r="5.2" fill="#ffffff"/>
<rect x="2230.0" y="238.2" width="95.7" height="94.4" fill="#0696d7" />
<rect x="2241.5" y="247.5" width="50" height="35" fill="none" stroke="#4f9a18" stroke-width="2.6"/>
<path d="M2291.5 282.5V314L2298.5 307.5L2304.5 319.5L2310 317L2304 305H2314Z" fill="#dfe1e6" stroke="#1a1a1a" stroke-width="2"/>
<defs><linearGradient id="gSheet" x1="0" y1="0" x2="0" y2="1"><stop offset="0" stop-color="#ffffff"/><stop offset="1" stop-color="#aeb5c4"/></linearGradient></defs>
<path d="M2451.7 286.5 L2488.3 248.6 L2521.9 266.0 L2495.2 304.5Z" fill="url(#gSheet)" stroke="#3a3a3a" stroke-width="2.6" stroke-linejoin="round"/>
<path d="M2463.9 273.9L2504.1 291.7 M2499.5 254.4L2466.2 292.5 M2476.1 261.2L2513.0 278.8 M2510.7 260.2L2480.7 298.5" stroke="#4a4a4a" stroke-width="2"/>
<path d="M2484 307.5L2496.4 318.5L2523.5 291" fill="none" stroke="#5aab0a" stroke-width="8.5"/>
<rect x="11.5" y="394.5" width="747" height="59" fill="#f0f0f0" stroke="#c6c6c6" stroke-width="2"/>
<path d="M23 425L35 418V432Z M35 425L47 418V432Z" fill="#333"/>
<text x="72.7" y="433.0" font-size="27" fill="#595959" font-weight="normal" text-anchor="start" textLength="130.0" lengthAdjust="spacingAndGlyphs" >BROWSER</text>
<circle cx="718.5" cy="424.5" r="11.5" fill="#2e2e2e"/>
<rect x="712.0" y="422.5" width="13.0" height="4.0" fill="#fff" />
<line x1="749.0" y1="410.0" x2="749.0" y2="438.0" stroke="#777" stroke-width="2" />
<line x1="753.0" y1="413.0" x2="753.0" y2="435.0" stroke="#bbb" stroke-width="2" />
<rect x="100.0" y="467.8" width="369.3" height="50.0" fill="#f1f1f1" />
<defs><linearGradient id="gTri" x1="0" y1="0" x2="1" y2="1"><stop offset="0" stop-color="#d0d0d0"/><stop offset="1" stop-color="#6a6a6a"/></linearGradient></defs>
<path d="M52 507L80 478V507Z" fill="url(#gTri)" stroke="#2a2a2a" stroke-width="2.5" stroke-linejoin="round"/>
<defs><radialGradient id="gBf5dc3c" cx="0.38" cy="0.32" r="0.7"><stop offset="0" stop-color="#ffffff"/><stop offset="0.35" stop-color="#f5dc3c"/><stop offset="1" stop-color="#f5dc3c"/></radialGradient></defs>
<path d="M121.4 498.0V507.0Q126.4 511.0 131.4 507.0V498.0Z" fill="#d3d6dc" stroke="#4a4e56" stroke-width="1.8"/>
<circle cx="126.4" cy="488.0" r="12" fill="url(#gBf5dc3c)" stroke="#c79a1c" stroke-width="1.8"/>
<rect x="162.6" y="473.9" width="244.7" height="38.7" fill="#9b9b9b" />
<path d="M171 482L178 475H207V503L200 511H171Z" fill="#e4e6ea" stroke="#444" stroke-width="2"/><path d="M171 482H200V511M200 482L207 475" fill="none" stroke="#444" stroke-width="2"/>
<text x="245.3" y="504.0" font-size="28" fill="#ffffff" font-weight="bold" text-anchor="start" textLength="138.0" lengthAdjust="spacingAndGlyphs" >(Unsaved)</text>
<circle cx="434" cy="494.3" r="15" fill="#fff" stroke="#333" stroke-width="3"/><circle cx="434" cy="494.3" r="5.5" fill="#333"/>
<rect x="145.3" y="528.4" width="334.7" height="48.4" fill="#f1f1f1" />
<path d="M101 537.5L121 554.0L101 570.5Z" fill="#e6e6e6" stroke="#444" stroke-width="3" stroke-linejoin="round"/>
<rect x="169.4" y="532.8" width="6.3" height="7.7" rx="1.5" fill="#595959" transform="rotate(0.0 172.6 552.6)"/><rect x="169.4" y="532.8" width="6.3" height="7.7" rx="1.5" fill="#595959" transform="rotate(45.0 172.6 552.6)"/><rect x="169.4" y="532.8" width="6.3" height="7.7" rx="1.5" fill="#595959" transform="rotate(90.0 172.6 552.6)"/><rect x="169.4" y="532.8" width="6.3" height="7.7" rx="1.5" fill="#595959" transform="rotate(135.0 172.6 552.6)"/><rect x="169.4" y="532.8" width="6.3" height="7.7" rx="1.5" fill="#595959" transform="rotate(180.0 172.6 552.6)"/><rect x="169.4" y="532.8" width="6.3" height="7.7" rx="1.5" fill="#595959" transform="rotate(225.0 172.6 552.6)"/><rect x="169.4" y="532.8" width="6.3" height="7.7" rx="1.5" fill="#595959" transform="rotate(270.0 172.6 552.6)"/><rect x="169.4" y="532.8" width="6.3" height="7.7" rx="1.5" fill="#595959" transform="rotate(315.0 172.6 552.6)"/>
<circle cx="172.6" cy="552.6" r="15.0" fill="#595959"/>
<circle cx="172.6" cy="552.6" r="9.3" fill="#f1f1f1"/>
<circle cx="172.6" cy="552.6" r="5.4" fill="#595959"/>
<text x="228.6" y="563.2" font-size="27" fill="#353535" font-weight="normal" text-anchor="start" textLength="223.0" lengthAdjust="spacingAndGlyphs" >Document Settings</text>
<rect x="145.3" y="589.0" width="274.1" height="48.4" fill="#f1f1f1" />
<path d="M101 597.4L121 613.9L101 630.4Z" fill="#e6e6e6" stroke="#444" stroke-width="3" stroke-linejoin="round"/>
<defs><linearGradient id="gFold" x1="0" y1="0" x2="0" y2="1"><stop offset="0" stop-color="#f6f7f9"/><stop offset="1" stop-color="#d5d9e0"/></linearGradient></defs>
<path d="M155.0 629.5Q153.0 629.5 153.0 627.5V600.5Q153.0 598.5 155.0 598.5H168.0Q170.0 598.5 170.0 600.5V602.0H188.0Q190.0 602.0 190.0 604.0V627.5Q190.0 629.5 188.0 629.5Z" fill="url(#gFold)" stroke="#3c4048" stroke-width="2.4"/>
<line x1="154.0" y1="607.0" x2="170.0" y2="607.0" stroke="#3c4048" stroke-width="2.4" />
<text x="228.6" y="623.6" font-size="27" fill="#353535" font-weight="normal" text-anchor="start" textLength="165.0" lengthAdjust="spacingAndGlyphs" >Named Views</text>
<rect x="145.3" y="648.0" width="236.2" height="50.0" fill="#f1f1f1" />
<path d="M101 657.0L121 673.5L101 690.0Z" fill="#e6e6e6" stroke="#444" stroke-width="3" stroke-linejoin="round"/>
<defs><radialGradient id="gBbcd0f6" cx="0.38" cy="0.32" r="0.7"><stop offset="0" stop-color="#ffffff"/><stop offset="0.35" stop-color="#bcd0f6"/><stop offset="1" stop-color="#bcd0f6"/></radialGradient></defs>
<path d="M165.3 678.0V687.0Q170.3 691.0 175.3 687.0V678.0Z" fill="#d3d6dc" stroke="#4a4e56" stroke-width="1.8"/>
<circle cx="170.3" cy="668.0" r="12" fill="url(#gBbcd0f6)" stroke="#7390c8" stroke-width="1.8"/>
<defs><linearGradient id="gFold" x1="0" y1="0" x2="0" y2="1"><stop offset="0" stop-color="#f6f7f9"/><stop offset="1" stop-color="#d5d9e0"/></linearGradient></defs>
<path d="M217.5 689.5Q215.5 689.5 215.5 687.5V660.5Q215.5 658.5 217.5 658.5H230.5Q232.5 658.5 232.5 660.5V662.0H250.5Q252.5 662.0 252.5 664.0V687.5Q252.5 689.5 250.5 689.5Z" fill="url(#gFold)" stroke="#3c4048" stroke-width="2.4"/>
<line x1="216.5" y1="667.0" x2="232.5" y2="667.0" stroke="#3c4048" stroke-width="2.4" />
<text x="290.7" y="684.3" font-size="27" fill="#353535" font-weight="normal" text-anchor="start" textLength="68.0" lengthAdjust="spacingAndGlyphs" >Origin</text>
<rect x="145.3" y="708.5" width="286.2" height="48.5" fill="#f1f1f1" />
<path d="M101 717.6L121 734.1L101 750.6Z" fill="#e6e6e6" stroke="#444" stroke-width="3" stroke-linejoin="round"/>
<defs><radialGradient id="gBf5dc3c" cx="0.38" cy="0.32" r="0.7"><stop offset="0" stop-color="#ffffff"/><stop offset="0.35" stop-color="#f5dc3c"/><stop offset="1" stop-color="#f5dc3c"/></radialGradient></defs>
<path d="M166.0 738.0V747.0Q171.0 751.0 176.0 747.0V738.0Z" fill="#d3d6dc" stroke="#4a4e56" stroke-width="1.8"/>
<circle cx="171.0" cy="728.0" r="12" fill="url(#gBf5dc3c)" stroke="#c79a1c" stroke-width="1.8"/>
<defs><linearGradient id="gFold" x1="0" y1="0" x2="0" y2="1"><stop offset="0" stop-color="#f6f7f9"/><stop offset="1" stop-color="#d5d9e0"/></linearGradient></defs>
<path d="M217.5 750.0Q215.5 750.0 215.5 748.0V721.0Q215.5 719.0 217.5 719.0H230.5Q232.5 719.0 232.5 721.0V722.5H250.5Q252.5 722.5 252.5 724.5V748.0Q252.5 750.0 250.5 750.0Z" fill="url(#gFold)" stroke="#3c4048" stroke-width="2.4"/>
<line x1="216.5" y1="727.5" x2="232.5" y2="727.5" stroke="#3c4048" stroke-width="2.4" />
<text x="290.7" y="744.5" font-size="27" fill="#353535" font-weight="normal" text-anchor="start" textLength="111.0" lengthAdjust="spacingAndGlyphs" >Sketches</text>
<path d="M207.0 753L215.0 746.5M222.1 753L230.1 746.5M237.2 753L245.2 746.5M252.3 753L260.3 746.5M267.4 753L275.4 746.5M282.5 753L290.5 746.5M297.6 753L305.6 746.5M312.7 753L320.7 746.5M327.8 753L335.8 746.5M342.9 753L350.9 746.5M358.0 753L366.0 746.5M373.1 753L381.1 746.5M388.2 753L396.2 746.5M403.3 753L411.3 746.5M418.4 753L426.4 746.5" fill="none" stroke="#7088aa" stroke-width="4.2" stroke-linecap="round"/>
<ellipse cx="3700" cy="446" rx="95" ry="12" fill="url(#gShadow)"/>
<rect x="3621" y="314" width="128" height="128" rx="3" fill="url(#gCube)" fill-opacity="0.88" stroke="#9d9d9d" stroke-width="2.5"/>
<rect x="3645" y="338" width="80.5" height="79.6" fill="#d5d8dd" fill-opacity="0.75"/>
<text x="3642.0" y="390.5" font-size="34" fill="#8b8e94" font-weight="bold" text-anchor="start" textLength="88.0" lengthAdjust="spacingAndGlyphs" >FRONT</text>
<text x="3624.0" y="307.8" font-size="35" fill="#7ee67e" font-weight="normal" text-anchor="start" textLength="17.0" lengthAdjust="spacingAndGlyphs" stroke="#7ee67e" stroke-width="0.8">Y</text>
<text x="3606.0" y="460.6" font-size="34" fill="#6a6af0" font-weight="normal" text-anchor="start" textLength="18.5" lengthAdjust="spacingAndGlyphs" stroke="#6a6af0" stroke-width="0.8">Z</text>
<text x="3759.8" y="443.0" font-size="35" fill="#f77b7b" font-weight="normal" text-anchor="start" textLength="17.0" lengthAdjust="spacingAndGlyphs" stroke="#f77b7b" stroke-width="0.8">X</text>
<rect x="3751.0" y="424.0" width="4.0" height="4.0" fill="#f88080" />
<rect x="3775.4" y="683.6" width="54.2" height="436.6" fill="#f0f0f0" />
<rect x="3775.4" y="683.6" width="54.2" height="44.1" fill="#c8c8c8" />
<rect x="3775.4" y="1096.0" width="54.2" height="24.2" fill="#c8c8c8" />
<path d="M3788.6 710L3800 703.4V717.3Z M3800 710L3811.8 703.4V717.3Z" fill="#333"/>
<text transform="translate(3791 731.2) rotate(90)" font-size="25" fill="#585858" textLength="208" lengthAdjust="spacingAndGlyphs">SKETCH PALETTE</text>
<rect x="11.5" y="1864.3" width="747" height="60" fill="#f0f0f0" stroke="#c6c6c6" stroke-width="2"/>
<text x="72.7" y="1903.3" font-size="27" fill="#595959" font-weight="normal" text-anchor="start" textLength="142.3" lengthAdjust="spacingAndGlyphs" >COMMENTS</text>
<circle cx="718.5" cy="1895" r="11.5" fill="#2e2e2e"/>
<rect x="712.0" y="1893.0" width="13.0" height="4.0" fill="#fff" />
<rect x="716.5" y="1888.5" width="4.0" height="13.0" fill="#fff" />
<line x1="749.0" y1="1880.0" x2="749.0" y2="1908.0" stroke="#777" stroke-width="2" />
<line x1="753.0" y1="1883.0" x2="753.0" y2="1905.0" stroke="#bbb" stroke-width="2" />
<rect x="1603.2" y="1865.0" width="632.8" height="60.0" fill="#f0f0f0" />
<path d="M1611.5 1897Q1613 1890 1631 1890Q1649 1890.5 1650 1896.5Q1650 1902.5 1634 1904H1622" fill="none" stroke="#333" stroke-width="2.6"/>
<rect x="1628.6" y="1881" width="6.4" height="33" fill="#fafafa" stroke="#444" stroke-width="2.2"/>
<path d="M1625.2 1881.7L1631.9 1874.7L1638 1881.7Z" fill="#fafafa" stroke="#444" stroke-width="2.2" stroke-linejoin="round"/>
<path d="M1634 1891.5Q1646 1892 1648 1896" fill="none" stroke="#333" stroke-width="2.6"/>
<path d="M1615.5 1904L1623.5 1898.5V1909.5Z" fill="#222"/>
<path d="M1663.0 1890.0H1677.7L1670.3 1899.4Z" fill="#333"/>
<rect x="1695" y="1890" width="37" height="24" fill="#f4f4f4" stroke="#444" stroke-width="3"/><rect x="1702" y="1897" width="23" height="10" fill="#9aa2ae" stroke="#444" stroke-width="2"/><path d="M1698 1889L1707 1876L1712 1884L1722 1880L1730 1884V1889Z" fill="#888"/>
<path d="M1766 1912Q1760 1900 1759 1896Q1761 1892 1766 1897L1770 1902V1880Q1772 1876 1775 1880V1896V1876Q1778 1872 1781 1876V1895V1878Q1784 1874 1787 1878V1896V1883Q1790 1879 1793 1883V1900Q1793 1908 1788 1914H1770Z" fill="#f2f2f2" stroke="#444" stroke-width="2.5"/>
<circle cx="1836" cy="1893" r="11.5" fill="#d4e6ea" stroke="#555" stroke-width="3"/><path d="M1845 1902L1856 1912" stroke="#333" stroke-width="6" stroke-linecap="round"/><path d="M1857 1878V1892M1850 1885H1864M1850 1896H1864" stroke="#444" stroke-width="2.5"/>
<circle cx="1903" cy="1890" r="14.5" fill="#dfe5e8" stroke="#444" stroke-width="3"/><rect x="1895" y="1882" width="16" height="15" fill="#f8f8f8" stroke="#555" stroke-width="2"/><path d="M1914 1901L1926 1913" stroke="#333" stroke-width="6" stroke-linecap="round"/>
<path d="M1940.4 1890.0H1956.2L1948.3 1899.4Z" fill="#333"/>
<rect x="1992" y="1876" width="37" height="30" rx="3" fill="#d9dde2" stroke="#444" stroke-width="2.5"/><rect x="1997" y="1881" width="27" height="20" fill="#8eaedb" stroke="#2b3d5c" stroke-width="2"/><path d="M2004 1912H2018L2015 1906H2007Z" fill="#ccc" stroke="#555" stroke-width="1.5"/>
<path d="M2035.4 1890.0H2051.2L2043.3 1899.4Z" fill="#333"/>
<rect x="2069.5" y="1876" width="37" height="38" rx="3" fill="#5f6670" stroke="#444" stroke-width="2"/>
<rect x="2073.0" y="1879.0" width="4.5" height="3.5" fill="#f4f4f4" />
<rect x="2073.0" y="1884.6" width="4.5" height="3.5" fill="#f4f4f4" />
<rect x="2073.0" y="1890.2" width="4.5" height="3.5" fill="#f4f4f4" />
<rect x="2073.0" y="1895.8" width="4.5" height="3.5" fill="#c0c4ca" />
<rect x="2073.0" y="1901.4" width="4.5" height="3.5" fill="#c0c4ca" />
<rect x="2073.0" y="1907.0" width="4.5" height="3.5" fill="#c0c4ca" />
<rect x="2080.0" y="1879.0" width="4.5" height="3.5" fill="#f4f4f4" />
<rect x="2080.0" y="1884.6" width="4.5" height="3.5" fill="#f4f4f4" />
<rect x="2080.0" y="1890.2" width="4.5" height="3.5" fill="#f4f4f4" />
<rect x="2080.0" y="1895.8" width="4.5" height="3.5" fill="#c0c4ca" />
<rect x="2080.0" y="1901.4" width="4.5" height="3.5" fill="#c0c4ca" />
<rect x="2080.0" y="1907.0" width="4.5" height="3.5" fill="#c0c4ca" />
<rect x="2087.0" y="1879.0" width="4.5" height="3.5" fill="#f4f4f4" />
<rect x="2087.0" y="1884.6" width="4.5" height="3.5" fill="#f4f4f4" />
<rect x="2087.0" y="1890.2" width="4.5" height="3.5" fill="#f4f4f4" />
<rect x="2087.0" y="1895.8" width="4.5" height="3.5" fill="#c0c4ca" />
<rect x="2087.0" y="1901.4" width="4.5" height="3.5" fill="#c0c4ca" />
<rect x="2087.0" y="1907.0" width="4.5" height="3.5" fill="#c0c4ca" />
<rect x="2094.0" y="1879.0" width="4.5" height="3.5" fill="#f4f4f4" />
<rect x="2094.0" y="1884.6" width="4.5" height="3.5" fill="#f4f4f4" />
<rect x="2094.0" y="1890.2" width="4.5" height="3.5" fill="#f4f4f4" />
<rect x="2094.0" y="1895.8" width="4.5" height="3.5" fill="#c0c4ca" />
<rect x="2094.0" y="1901.4" width="4.5" height="3.5" fill="#c0c4ca" />
<rect x="2094.0" y="1907.0" width="4.5" height="3.5" fill="#c0c4ca" />
<rect x="2101.0" y="1879.0" width="4.5" height="3.5" fill="#f4f4f4" />
<rect x="2101.0" y="1884.6" width="4.5" height="3.5" fill="#f4f4f4" />
<rect x="2101.0" y="1890.2" width="4.5" height="3.5" fill="#f4f4f4" />
<rect x="2101.0" y="1895.8" width="4.5" height="3.5" fill="#c0c4ca" />
<rect x="2101.0" y="1901.4" width="4.5" height="3.5" fill="#c0c4ca" />
<rect x="2101.0" y="1907.0" width="4.5" height="3.5" fill="#c0c4ca" />
<path d="M2113.0 1890.0H2128.6L2120.8 1899.4Z" fill="#333"/>
<rect x="2145" y="1877" width="17.5" height="15.5" rx="2" fill="#8fb0d8" stroke="#3c5d92" stroke-width="2.5"/>
<rect x="2165" y="1877" width="17.5" height="15.5" rx="2" fill="#8fb0d8" stroke="#3c5d92" stroke-width="2.5"/>
<rect x="2145" y="1894" width="17.5" height="15.5" rx="2" fill="#8fb0d8" stroke="#3c5d92" stroke-width="2.5"/>
<rect x="2165" y="1894" width="17.5" height="15.5" rx="2" fill="#8fb0d8" stroke="#3c5d92" stroke-width="2.5"/>
<path d="M2189.8 1890.0H2205.7L2197.8 1899.4Z" fill="#333"/>
<text x="3313.4" y="1905.2" font-size="27" fill="#3a3a3a" font-weight="bold" text-anchor="start" textLength="440.2" lengthAdjust="spacingAndGlyphs" >1 Sketch Line | Length : 5.00 mm</text>
<rect x="0.0" y="1936.3" width="3840.0" height="123.7" fill="#f1f1f1" />
<rect x="0.0" y="1936.3" width="3840.0" height="4.3" fill="#c9c9c9" />
<path d="M27.3 1983.5H32V2018.3H27.3Z M57.5 1983.5V2018.3L33 2001Z" fill="#505050"/>
<path d="M87.8 2001L113 1985V2016.8Z M114.5 1992H120.5V2010H114.5Z" fill="#505050"/>
<path d="M151.4 1982V2020.4L181.7 2001Z" fill="#505050"/>
<path d="M212 1992H218V2010H212Z M219.5 1985L244.7 2001L219.5 2016.8Z" fill="#505050"/>
<path d="M277 1983.5L301.5 2001L277 2018.3Z M303.5 1983.5H308.2V2018.3H303.5Z" fill="#505050"/>
<defs><linearGradient id="gTL" x1="0" y1="0" x2="1" y2="1"><stop offset="0" stop-color="#ffffff"/><stop offset="1" stop-color="#b4cfee"/></linearGradient></defs>
<rect x="366.5" y="1980" width="37" height="37" rx="1.5" fill="url(#gTL)" stroke="#111" stroke-width="2.8"/>
<path d="M373.5 1985.5V2010H396.3" fill="none" stroke="#151515" stroke-width="2.6"/>
<rect x="370.0" y="2004.0" width="6.0" height="9.0" fill="#6fa8e0" />
<path d="M377 2005L400 1981" stroke="#e9a060" stroke-width="5" stroke-linecap="round"/><path d="M389 1993L403 1979" stroke="#f7dc00" stroke-width="6" stroke-linecap="round"/><path d="M376 2006L380 2001" stroke="#222" stroke-width="4"/>
<line x1="387.0" y1="2026.0" x2="387.0" y2="2043.5" stroke="#c8c8c8" stroke-width="3" />
<path d="M399.7 1963.8H430V1975L418 1985V2043.5H412.4V1985L399.7 1975Z" fill="#666"/>
<rect x="3784.2" y="1980.9" width="6.3" height="7.7" rx="1.5" fill="#5a5a5a" transform="rotate(0.0 3787.4 2000.7)"/><rect x="3784.2" y="1980.9" width="6.3" height="7.7" rx="1.5" fill="#5a5a5a" transform="rotate(45.0 3787.4 2000.7)"/><rect x="3784.2" y="1980.9" width="6.3" height="7.7" rx="1.5" fill="#5a5a5a" transform="rotate(90.0 3787.4 2000.7)"/><rect x="3784.2" y="1980.9" width="6.3" height="7.7" rx="1.5" fill="#5a5a5a" transform="rotate(135.0 3787.4 2000.7)"/><rect x="3784.2" y="1980.9" width="6.3" height="7.7" rx="1.5" fill="#5a5a5a" transform="rotate(180.0 3787.4 2000.7)"/><rect x="3784.2" y="1980.9" width="6.3" height="7.7" rx="1.5" fill="#5a5a5a" transform="rotate(225.0 3787.4 2000.7)"/><rect x="3784.2" y="1980.9" width="6.3" height="7.7" rx="1.5" fill="#5a5a5a" transform="rotate(270.0 3787.4 2000.7)"/><rect x="3784.2" y="1980.9" width="6.3" height="7.7" rx="1.5" fill="#5a5a5a" transform="rotate(315.0 3787.4 2000.7)"/>
<circle cx="3787.4" cy="2000.7" r="15.0" fill="#5a5a5a"/>
<circle cx="3787.4" cy="2000.7" r="9.3" fill="#f1f1f1"/>
<circle cx="3787.4" cy="2000.7" r="5.4" fill="#5a5a5a"/>
</svg></body></html>
